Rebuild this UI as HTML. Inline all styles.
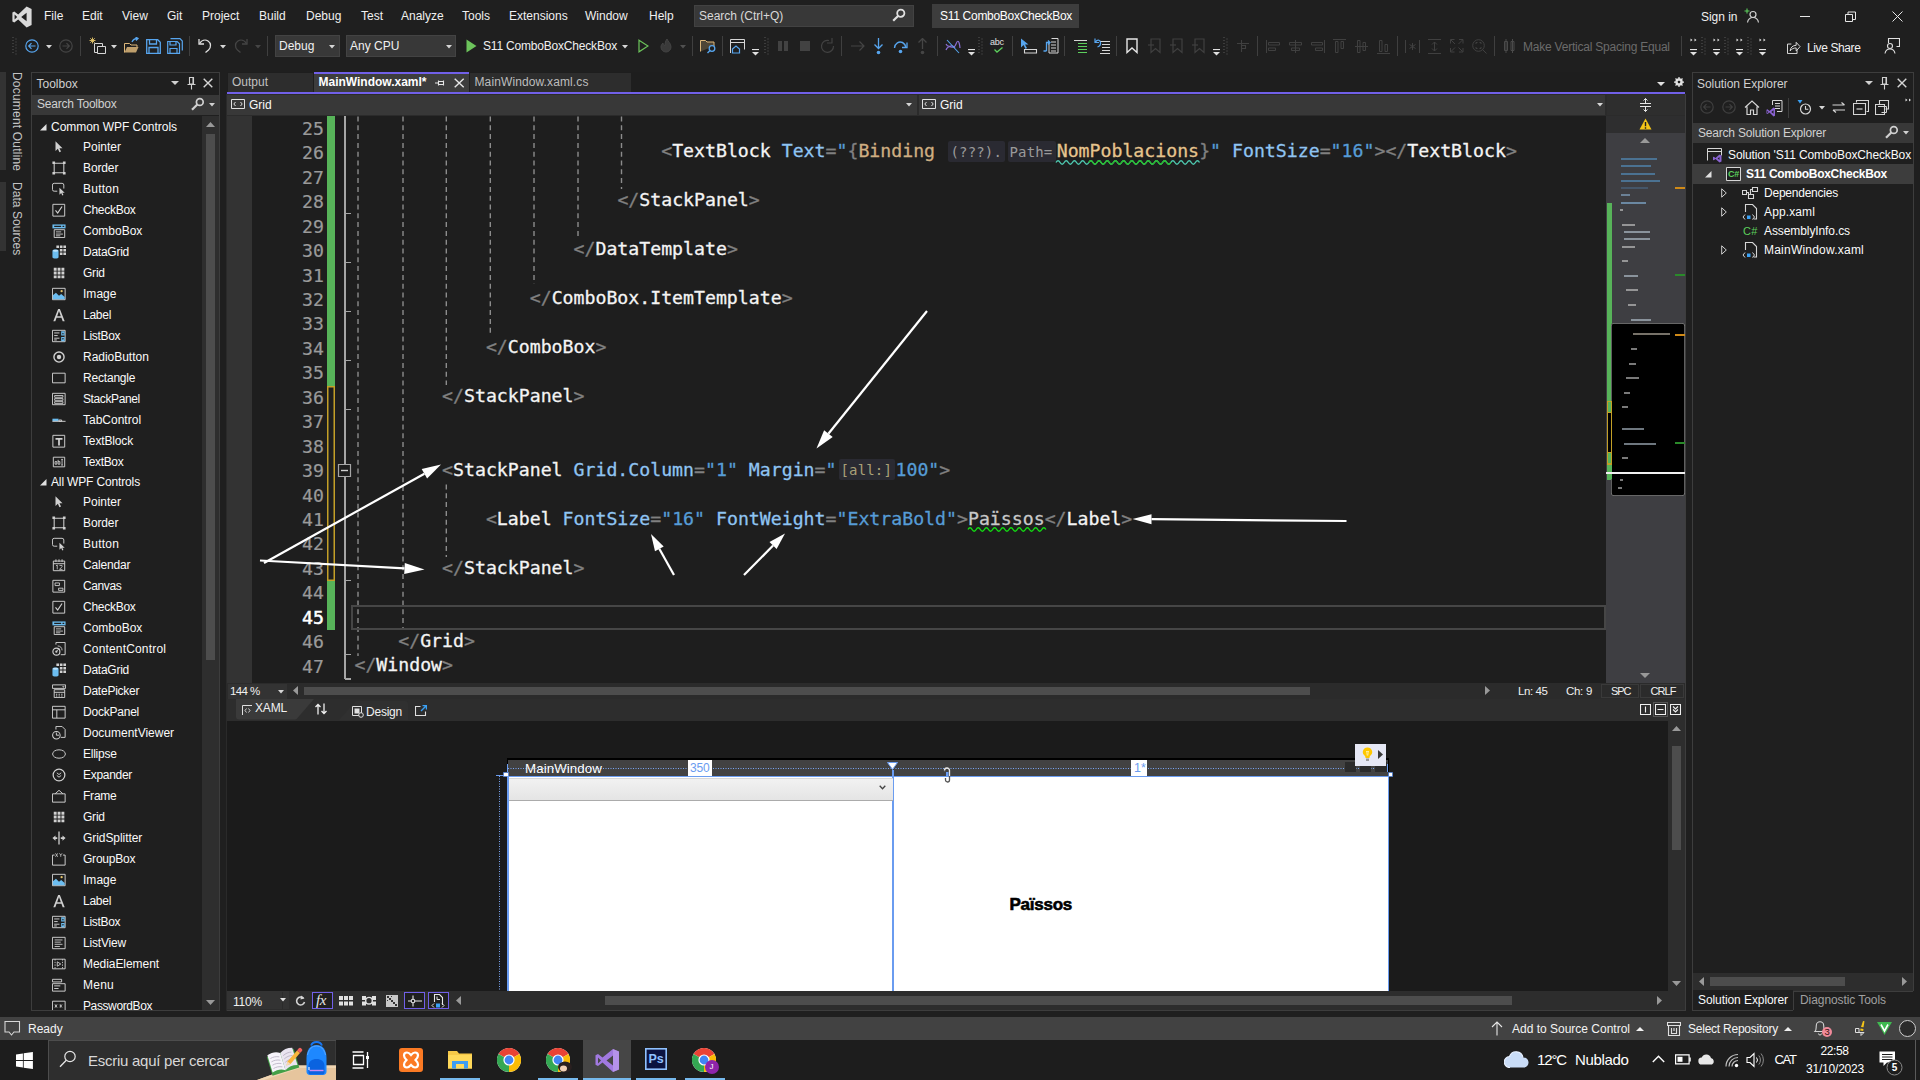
<!DOCTYPE html>
<html lang="ca"><head><meta charset="utf-8"><title>S11 ComboBoxCheckBox - Microsoft Visual Studio</title>
<style>
html,body{margin:0;padding:0;background:#1f1f1f;overflow:hidden;}
body{width:1920px;height:1080px;position:relative;overflow:hidden;font-family:"Liberation Sans",sans-serif;font-size:12px;color:#fafafa;}
div,svg{position:absolute;}
.t{white-space:pre;}
.m{white-space:pre;font-family:"DejaVu Sans Mono","Liberation Mono",monospace;}
.b{font-weight:bold;}
</style></head><body>
<svg style="left:12px;top:6px;" width="20" height="22" viewBox="0 0 20 22"><path d="M14.6 0.6 L19.6 2.9 V19.1 L14.6 21.4 L6.2 13.4 L2.3 16.4 L0.4 15.5 V6.5 L2.3 5.6 L6.2 8.6 Z M14.6 6.8 L9.2 11 L14.6 15.2 Z M2.6 8.6 V13.4 L5.2 11 Z" fill="#d9d9d9" fill-rule="evenodd"/></svg>
<div class="t" style="left:44px;top:8px;color:#f0f0f0;font-size:12px;line-height:16px;">File</div>
<div class="t" style="left:82px;top:8px;color:#f0f0f0;font-size:12px;line-height:16px;">Edit</div>
<div class="t" style="left:122px;top:8px;color:#f0f0f0;font-size:12px;line-height:16px;">View</div>
<div class="t" style="left:167px;top:8px;color:#f0f0f0;font-size:12px;line-height:16px;">Git</div>
<div class="t" style="left:202px;top:8px;color:#f0f0f0;font-size:12px;line-height:16px;">Project</div>
<div class="t" style="left:259px;top:8px;color:#f0f0f0;font-size:12px;line-height:16px;">Build</div>
<div class="t" style="left:306px;top:8px;color:#f0f0f0;font-size:12px;line-height:16px;">Debug</div>
<div class="t" style="left:361px;top:8px;color:#f0f0f0;font-size:12px;line-height:16px;">Test</div>
<div class="t" style="left:401px;top:8px;color:#f0f0f0;font-size:12px;line-height:16px;">Analyze</div>
<div class="t" style="left:462px;top:8px;color:#f0f0f0;font-size:12px;line-height:16px;">Tools</div>
<div class="t" style="left:509px;top:8px;color:#f0f0f0;font-size:12px;line-height:16px;">Extensions</div>
<div class="t" style="left:585px;top:8px;color:#f0f0f0;font-size:12px;line-height:16px;">Window</div>
<div class="t" style="left:649px;top:8px;color:#f0f0f0;font-size:12px;line-height:16px;">Help</div>
<div style="left:694px;top:5px;width:220px;height:22px;background:#383838;box-shadow:inset 0 0 0 1px #424242;"></div>
<div class="t" style="left:699px;top:8px;color:#d8d8d8;font-size:12px;line-height:16px;">Search (Ctrl+Q)</div>
<svg style="left:892px;top:8px;" width="14" height="14" viewBox="0 0 14 14"><circle cx="8.8" cy="5.2" r="3.6" fill="none" stroke="#e0e0e0" stroke-width="1.8"/><path d="M6.3 7.7L1.2 12.8" stroke="#e0e0e0" stroke-width="2.2"/></svg>
<div style="left:932px;top:4px;width:147px;height:24px;background:#3d3d3d;"></div>
<div class="t" style="left:940px;top:8px;color:#ffffff;font-size:12px;line-height:16px;letter-spacing:-0.293px;">S11 ComboBoxCheckBox</div>
<div class="t" style="left:1701px;top:9px;color:#f0f0f0;font-size:12px;line-height:16px;letter-spacing:-0.028px;">Sign in</div>
<svg style="left:1744px;top:8px;" width="16" height="16" viewBox="0 0 16 16"><circle cx="9" cy="6.5" r="3" fill="none" stroke="#d0d0d0" stroke-width="1.2"/><path d="M3.5 14.5c0.6-3.6 2.6-5 5.5-5s4.9 1.4 5.5 5" fill="none" stroke="#d0d0d0" stroke-width="1.2"/><path d="M3 0.5v5M0.5 3h5" stroke="#5ccf5c" stroke-width="1.1"/></svg>
<div style="left:1800px;top:16px;width:10px;height:1px;background:#e6e6e6;"></div>
<svg style="left:1845px;top:11px;" width="12" height="12" viewBox="0 0 12 12"><path d="M0.5 3.5h7v7h-7zM3 3.5V1h7.5v7.5H8" fill="none" stroke="#e6e6e6" stroke-width="1"/></svg>
<svg style="left:1892px;top:11px;" width="12" height="12" viewBox="0 0 12 12"><path d="M0.5 0.5l10 10M10.5 0.5l-10 10" stroke="#e6e6e6" stroke-width="1"/></svg>
<svg style="left:12px;top:37px;" width="6" height="18" viewBox="0 0 6 18"><path d="M1 0V18" stroke="#5a5a5a" stroke-width="1" stroke-dasharray="1 2"/><path d="M4 1.5V18" stroke="#5a5a5a" stroke-width="1" stroke-dasharray="1 2"/></svg>
<svg style="left:25px;top:39px;" width="14" height="14" viewBox="0 0 14 14"><circle cx="7" cy="7" r="6.2" fill="none" stroke="#57a5ee" stroke-width="1.2"/><path d="M10.5 7H4M6.5 4.2L3.7 7l2.8 2.8" fill="none" stroke="#57a5ee" stroke-width="1.2"/></svg>
<svg style="left:46px;top:45px;" width="6" height="3.5" viewBox="0 0 6 3.5"><path d="M0 0H6L3.0 3.5Z" fill="#d6d6d6"/></svg>
<svg style="left:59px;top:39px;" width="14" height="14" viewBox="0 0 14 14"><circle cx="7" cy="7" r="6.2" fill="none" stroke="#444" stroke-width="1.2"/><path d="M3.5 7H10M7.5 4.2L10.3 7 7.5 9.8" fill="none" stroke="#444" stroke-width="1.2"/></svg>
<div style="left:80px;top:36px;width:1px;height:20px;background:#3f3f3f;"></div>
<svg style="left:89px;top:37px;" width="18" height="18" viewBox="0 0 18 18"><path d="M5.5 6.5h8v9h-8z" fill="none" stroke="#d6d6d6" stroke-width="1"/><path d="M8.5 9.5h8v7h-8z" fill="#1f1f1f" stroke="#d6d6d6" stroke-width="1"/><path d="M3.5 0.5v6M0.5 3.5h6M1.3 1.3l4.4 4.4M5.7 1.3L1.3 5.7" stroke="#e8c76a" stroke-width="0.9"/></svg>
<svg style="left:111px;top:45px;" width="6" height="3.5" viewBox="0 0 6 3.5"><path d="M0 0H6L3.0 3.5Z" fill="#d6d6d6"/></svg>
<svg style="left:124px;top:37px;" width="16" height="17" viewBox="0 0 16 17"><path d="M0.5 15.5V6.5h5l1.5 1.5h6v2" fill="none" stroke="#dcb67a" stroke-width="1"/><path d="M0.5 15.5l2.5-5.5h11.5l-2.5 5.500z" fill="#dcb67a" opacity="0.85"/><path d="M8 5c1-2.500 3-3.500 5.500-3.500M11.500 0l2.500 1.500-2 2" fill="none" stroke="#57a5ee" stroke-width="1.3"/></svg>
<svg style="left:146px;top:39px;" width="15" height="15" viewBox="0 0 15 15"><path d="M0.7 0.7h11l2.600 2.600v11h-13.600z" fill="none" stroke="#57a5ee" stroke-width="1.300"/><path d="M3.500 0.700v4.300h7v-4.300M3 14.300v-5.800h9v5.800" fill="none" stroke="#57a5ee" stroke-width="1.300"/></svg>
<svg style="left:167px;top:38px;" width="16" height="16" viewBox="0 0 16 16"><path d="M3.500 0.700h9.500l2.300 2.300v9.500" fill="none" stroke="#57a5ee" stroke-width="1.200"/><path d="M0.700 3.500h9.500l2.300 2.300v9.500h-11.800z" fill="none" stroke="#57a5ee" stroke-width="1.200"/><path d="M3 3.500v3.500h6v-3.500M3 15.300v-4.800h7v4.800" fill="none" stroke="#57a5ee" stroke-width="1.200"/></svg>
<div style="left:189px;top:36px;width:1px;height:20px;background:#3f3f3f;"></div>
<svg style="left:198px;top:38px;" width="14" height="15" viewBox="0 0 14 15"><path d="M1 1v5h5" fill="none" stroke="#e0e0e0" stroke-width="1.300"/><path d="M1.500 5.500C3.500 2.500 7 1 10 3s3.500 6 0.500 9l-3 2.500" fill="none" stroke="#e0e0e0" stroke-width="1.300"/></svg>
<svg style="left:220px;top:45px;" width="6" height="3.5" viewBox="0 0 6 3.5"><path d="M0 0H6L3.0 3.5Z" fill="#d6d6d6"/></svg>
<svg style="left:234px;top:38px;" width="14" height="15" viewBox="0 0 14 15"><path d="M13 1v5h-5" fill="none" stroke="#454545" stroke-width="1.300"/><path d="M12.500 5.500C10.500 2.500 7 1 4 3s-3.500 6-0.500 9l3 2.500" fill="none" stroke="#454545" stroke-width="1.300"/></svg>
<svg style="left:255px;top:45px;" width="6" height="3.5" viewBox="0 0 6 3.5"><path d="M0 0H6L3.0 3.5Z" fill="#454545"/></svg>
<div style="left:267px;top:36px;width:1px;height:20px;background:#3f3f3f;"></div>
<div style="left:275px;top:35px;width:65px;height:22px;background:#383838;box-shadow:inset 0 0 0 1px #434343;"></div>
<div class="t" style="left:279px;top:38px;color:#f0f0f0;font-size:12px;line-height:16px;">Debug</div>
<svg style="left:329px;top:45px;" width="6" height="3.5" viewBox="0 0 6 3.5"><path d="M0 0H6L3.0 3.5Z" fill="#d6d6d6"/></svg>
<div style="left:346px;top:35px;width:110px;height:22px;background:#383838;box-shadow:inset 0 0 0 1px #434343;"></div>
<div class="t" style="left:350px;top:38px;color:#f0f0f0;font-size:12px;line-height:16px;">Any CPU</div>
<svg style="left:446px;top:45px;" width="6" height="3.5" viewBox="0 0 6 3.5"><path d="M0 0H6L3.0 3.5Z" fill="#d6d6d6"/></svg>
<svg style="left:466px;top:39px;" width="11" height="14" viewBox="0 0 11 14"><path d="M0.500 0.500L10.500 7 0.500 13.500Z" fill="#6cc35b"/></svg>
<div class="t" style="left:483px;top:38px;color:#f0f0f0;font-size:12px;line-height:16px;letter-spacing:-0.193px;">S11 ComboBoxCheckBox</div>
<svg style="left:622px;top:45px;" width="6" height="3.5" viewBox="0 0 6 3.5"><path d="M0 0H6L3.0 3.5Z" fill="#d6d6d6"/></svg>
<svg style="left:638px;top:39px;" width="11" height="14" viewBox="0 0 11 14"><path d="M1 1.200L10 7 1 12.800Z" fill="none" stroke="#6cc35b" stroke-width="1.200"/></svg>
<svg style="left:659px;top:38px;" width="16" height="16" viewBox="0 0 16 16"><path d="M8 1c1 3 4 4 4 8a5 5 0 0 1-10 0c0-2 1-3 2-4 0 2 1 2.500 2 2.500C6 5 6.500 3 8 1z" fill="#3a3a3a" stroke="#444" stroke-width="1"/></svg>
<svg style="left:680px;top:45px;" width="6" height="3.5" viewBox="0 0 6 3.5"><path d="M0 0H6L3.0 3.5Z" fill="#505050"/></svg>
<div style="left:692px;top:36px;width:1px;height:20px;background:#3f3f3f;"></div>
<svg style="left:700px;top:38px;" width="17" height="16" viewBox="0 0 17 16"><path d="M0.500 13.500V2.500h5l1.500 1.500h7v4" fill="#dcb67a" fill-opacity="0.250" stroke="#dcb67a" stroke-width="1"/><circle cx="12" cy="10.500" r="2.800" fill="#1f1f1f" stroke="#57a5ee" stroke-width="1.300"/><path d="M10 12.500L7.500 15" stroke="#57a5ee" stroke-width="1.500"/></svg>
<div style="left:722px;top:36px;width:1px;height:20px;background:#3f3f3f;"></div>
<svg style="left:730px;top:38px;" width="16" height="16" viewBox="0 0 16 16"><path d="M0.500 15V1.500h14v10" fill="none" stroke="#d6d6d6" stroke-width="1"/><path d="M0.500 4.500h14" stroke="#d6d6d6" stroke-width="1"/><path d="M2.500 11l3.500-3 3.500 3v4h-7z" fill="none" stroke="#57a5ee" stroke-width="1.200"/></svg>
<svg style="left:752px;top:49px;" width="7" height="7" viewBox="0 0 7 7"><path d="M0 0.5h7" stroke="#e0e0e0" stroke-width="1.2"/><path d="M0 3h7L3.5 6.5Z" fill="#e0e0e0"/></svg>
<svg style="left:764px;top:37px;" width="6" height="18" viewBox="0 0 6 18"><path d="M1 0V18" stroke="#5a5a5a" stroke-width="1" stroke-dasharray="1 2"/><path d="M4 1.5V18" stroke="#5a5a5a" stroke-width="1" stroke-dasharray="1 2"/></svg>
<div style="left:778px;top:41px;width:4px;height:10px;background:#424242;"></div>
<div style="left:784px;top:41px;width:4px;height:10px;background:#424242;"></div>
<div style="left:800px;top:41px;width:10px;height:10px;background:#424242;"></div>
<svg style="left:820px;top:38px;" width="15" height="16" viewBox="0 0 15 16"><path d="M9 2.500A6 6 0 1 0 13.500 8" fill="none" stroke="#424242" stroke-width="1.200"/><path d="M12 0v5h-5" fill="none" stroke="#424242" stroke-width="1.200"/></svg>
<div style="left:841px;top:36px;width:1px;height:20px;background:#3f3f3f;"></div>
<svg style="left:851px;top:40px;" width="14" height="12" viewBox="0 0 14 12"><path d="M0 6h13M8.500 1.500L13 6l-4.500 4.500" fill="none" stroke="#454545" stroke-width="1.200"/></svg>
<svg style="left:873px;top:38px;" width="11" height="17" viewBox="0 0 11 17"><path d="M5.500 0v10M1.500 6.500l4 4 4-4" fill="none" stroke="#57a5ee" stroke-width="1.300"/><circle cx="5.500" cy="14.500" r="1.800" fill="#57a5ee"/></svg>
<svg style="left:893px;top:39px;" width="16" height="15" viewBox="0 0 16 15"><path d="M1.500 9C2 4 6 2 9.500 3.500c2 1 3 3 3.500 5" fill="none" stroke="#57a5ee" stroke-width="1.400"/><path d="M9 8.500h5v-5" fill="none" stroke="#57a5ee" stroke-width="1.300"/><circle cx="7.500" cy="12.500" r="1.800" fill="#57a5ee"/></svg>
<svg style="left:917px;top:38px;" width="11" height="17" viewBox="0 0 11 17"><path d="M5.500 11V1M1.500 4.500l4-4 4 4" fill="none" stroke="#454545" stroke-width="1.300"/><circle cx="5.500" cy="14.500" r="1.800" fill="#454545"/></svg>
<div style="left:937px;top:36px;width:1px;height:20px;background:#3f3f3f;"></div>
<svg style="left:945px;top:39px;" width="16" height="15" viewBox="0 0 16 15"><path d="M1 11c3-8 7 2 10-6s4 4 4 4M1 5c3 6 6-2 9 4" fill="none" stroke="#8a6fd6" stroke-width="1.200"/><path d="M2 1l12 13" stroke="#57a5ee" stroke-width="1.100"/></svg>
<svg style="left:968px;top:49px;" width="7" height="7" viewBox="0 0 7 7"><path d="M0 0.5h7" stroke="#e0e0e0" stroke-width="1.2"/><path d="M0 3h7L3.5 6.5Z" fill="#e0e0e0"/></svg>
<svg style="left:978px;top:37px;" width="6" height="18" viewBox="0 0 6 18"><path d="M1 0V18" stroke="#5a5a5a" stroke-width="1" stroke-dasharray="1 2"/><path d="M4 1.5V18" stroke="#5a5a5a" stroke-width="1" stroke-dasharray="1 2"/></svg>
<div class="t" style="left:990px;top:37px;color:#e0e0e0;font-size:9px;line-height:10px;letter-spacing:-0.2px;">abc</div>
<svg style="left:994px;top:47px;" width="9" height="6" viewBox="0 0 9 6"><path d="M0.500 2.500l2.500 2.500 5.500-4.500" fill="none" stroke="#5ccf5c" stroke-width="1.300"/></svg>
<div style="left:1012px;top:36px;width:1px;height:20px;background:#3f3f3f;"></div>
<svg style="left:1020px;top:38px;" width="18" height="16" viewBox="0 0 18 16"><path d="M1 0.500v9l2.500-2.500 2 4 1.500-1-2-3.500h3.500z" fill="#57a5ee"/><path d="M4.500 11.500h12v3.500h-12z" fill="none" stroke="#d6d6d6" stroke-width="1.100"/></svg>
<svg style="left:1042px;top:38px;" width="17" height="16" viewBox="0 0 17 16"><path d="M9.500 0.500h6.500v14.500h-9v-11" fill="none" stroke="#d6d6d6" stroke-width="1"/><path d="M9 4h5M9 7h5M9 10h5M9 13h5" stroke="#d6d6d6" stroke-width="1"/><path d="M4.500 13V4.500h3M1.500 13h3M6 2.500l2 2-2 2" fill="none" stroke="#57a5ee" stroke-width="1.300"/></svg>
<div style="left:1064px;top:36px;width:1px;height:20px;background:#3f3f3f;"></div>
<svg style="left:1074px;top:40px;" width="14" height="13" viewBox="0 0 14 13"><path d="M0 0.500h13" stroke="#d6d6d6" stroke-width="1"/><path d="M4 3.500h9M4 6.500h9M4 9.500h9M4 12.500h9" stroke="#5ccf5c" stroke-width="1"/></svg>
<svg style="left:1094px;top:38px;" width="17" height="16" viewBox="0 0 17 16"><path d="M6 3.500h10M8 6.500h8M8 9.500h8M8 12.500h8M6 15.500h10" stroke="#d6d6d6" stroke-width="1"/><path d="M1 0.500v4h4M1.500 4C3 1.500 6 1.500 6.500 4.500S5 8.500 3.500 9" fill="none" stroke="#57a5ee" stroke-width="1.200"/></svg>
<div style="left:1116px;top:36px;width:1px;height:20px;background:#3f3f3f;"></div>
<svg style="left:1126px;top:38px;" width="12" height="16" viewBox="0 0 12 16"><path d="M1 1h10v13.500l-5-4.500-5 4.500z" fill="none" stroke="#e6e6e6" stroke-width="1.400"/></svg>
<svg style="left:1148px;top:38px;" width="14" height="16" viewBox="0 0 14 16"><path d="M3 1h9v13.500l-4.500-4-4.500 4z" fill="none" stroke="#404040" stroke-width="1.200"/><path d="M0 7h6" stroke="#404040" stroke-width="1.200"/></svg>
<svg style="left:1170px;top:38px;" width="14" height="16" viewBox="0 0 14 16"><path d="M3 1h9v13.500l-4.500-4-4.500 4z" fill="none" stroke="#404040" stroke-width="1.200"/><path d="M0 7h6" stroke="#404040" stroke-width="1.200"/></svg>
<svg style="left:1192px;top:38px;" width="14" height="16" viewBox="0 0 14 16"><path d="M3 1h9v13.500l-4.500-4-4.500 4z" fill="none" stroke="#404040" stroke-width="1.200"/><path d="M0 7h6" stroke="#404040" stroke-width="1.200"/></svg>
<svg style="left:1213px;top:49px;" width="7" height="7" viewBox="0 0 7 7"><path d="M0 0.5h7" stroke="#e0e0e0" stroke-width="1.2"/><path d="M0 3h7L3.5 6.5Z" fill="#e0e0e0"/></svg>
<svg style="left:1223px;top:37px;" width="6" height="18" viewBox="0 0 6 18"><path d="M1 0V18" stroke="#5a5a5a" stroke-width="1" stroke-dasharray="1 2"/><path d="M4 1.5V18" stroke="#5a5a5a" stroke-width="1" stroke-dasharray="1 2"/></svg>
<svg style="left:1237px;top:40px;" width="13" height="13" viewBox="0 0 13 13"><path d="M0 3.500h12M4.500 0v12M4.500 5.500h4v3h-4" fill="none" stroke="#404040" stroke-width="1.100"/></svg>
<div style="left:1257px;top:36px;width:1px;height:20px;background:#3f3f3f;"></div>
<svg style="left:1266px;top:40px;" width="15" height="13" viewBox="0 0 15 13"><path d="M0.500 0v13" stroke="#404040"/><path d="M2.500 2.500h11v2.500h-11zM2.500 8h7v2.500h-7z" fill="none" stroke="#404040"/></svg>
<svg style="left:1288px;top:40px;" width="15" height="13" viewBox="0 0 15 13"><path d="M7.500 0v13" stroke="#404040"/><path d="M1.500 2.500h12v2.500h-12zM3.500 8h8v2.500h-8z" fill="none" stroke="#404040"/></svg>
<svg style="left:1310px;top:40px;" width="15" height="13" viewBox="0 0 15 13"><path d="M14.500 0v13" stroke="#404040"/><path d="M1.500 2.500h11v2.500h-11zM5.500 8h7v2.500h-7z" fill="none" stroke="#404040"/></svg>
<svg style="left:1333px;top:39px;" width="13" height="15" viewBox="0 0 13 15"><path d="M0 0.500h13" stroke="#404040"/><path d="M2.500 2.500h2.500v11h-2.500zM8 2.500h2.500v7h-2.500z" fill="none" stroke="#404040"/></svg>
<svg style="left:1355px;top:39px;" width="13" height="15" viewBox="0 0 13 15"><path d="M0 7.500h13" stroke="#404040"/><path d="M2.500 1.500h2.500v12h-2.500zM8 3.500h2.500v8h-2.500z" fill="none" stroke="#404040"/></svg>
<svg style="left:1377px;top:39px;" width="13" height="15" viewBox="0 0 13 15"><path d="M0 14.500h13" stroke="#404040"/><path d="M2.500 1.500h2.500v11h-2.500zM8 5.500h2.500v7h-2.500z" fill="none" stroke="#404040"/></svg>
<div style="left:1397px;top:36px;width:1px;height:20px;background:#3f3f3f;"></div>
<svg style="left:1405px;top:40px;" width="16" height="13" viewBox="0 0 16 13"><path d="M0.500 0v13M14.500 0v13M7.500 3v7M4.500 4.500l6 4M10.500 4.500l-6 4" stroke="#404040" fill="none"/></svg>
<svg style="left:1428px;top:39px;" width="14" height="15" viewBox="0 0 14 15"><path d="M0 0.500h13M0 14.500h13M6.500 3v9M4 5.500l2.500-2.500 2.500 2.500M4 9.500l2.500 2.500 2.500-2.500" stroke="#404040" fill="none"/></svg>
<svg style="left:1450px;top:39px;" width="14" height="14" viewBox="0 0 14 14"><path d="M0.500 4.500v-4h4M9 0.500h4v4M13 9v4h-4M4.500 13h-4v-4M1 1l4 4M12.500 1l-4 4M12.500 12.500l-4-4M1 12.500l4-4" stroke="#404040" fill="none"/></svg>
<svg style="left:1472px;top:39px;" width="15" height="15" viewBox="0 0 15 15"><circle cx="6.500" cy="6.500" r="5.800" fill="none" stroke="#404040"/><path d="M10.500 10.500l4 4M4 5v-1.500h1.500M7.500 3.500h1.500v1.500M9 8v1.500h-1.500M5.500 9.500h-1.500v-1.500" stroke="#404040" fill="none"/></svg>
<div style="left:1494px;top:36px;width:1px;height:20px;background:#3f3f3f;"></div>
<svg style="left:1503px;top:39px;" width="13" height="15" viewBox="0 0 13 15"><path d="M1.500 2.500h3v9h-3zM8 2.500h3v9h-3zM3 0v14M9.500 0v14" stroke="#4a4a4a" fill="none"/></svg>
<div class="t" style="left:1523px;top:39px;color:#6b6b6b;font-size:12px;line-height:16px;letter-spacing:-0.22px;">Make Vertical Spacing Equal</div>
<div style="left:1681px;top:36px;width:1px;height:20px;background:#3f3f3f;"></div>
<svg style="left:1690px;top:38px;" width="8" height="4" viewBox="0 0 8 4"><path d="M0.500 0.500l2 1.500-2 1.500zM4.500 0.500l2 1.500-2 1.500z" fill="#e0e0e0"/></svg>
<svg style="left:1690px;top:49px;" width="7" height="7" viewBox="0 0 7 7"><path d="M0 0.5h7" stroke="#e0e0e0" stroke-width="1.2"/><path d="M0 3h7L3.5 6.5Z" fill="#e0e0e0"/></svg>
<svg style="left:1713px;top:38px;" width="8" height="4" viewBox="0 0 8 4"><path d="M0.500 0.500l2 1.500-2 1.500zM4.500 0.500l2 1.500-2 1.500z" fill="#e0e0e0"/></svg>
<svg style="left:1713px;top:49px;" width="7" height="7" viewBox="0 0 7 7"><path d="M0 0.5h7" stroke="#e0e0e0" stroke-width="1.2"/><path d="M0 3h7L3.5 6.5Z" fill="#e0e0e0"/></svg>
<svg style="left:1736px;top:38px;" width="8" height="4" viewBox="0 0 8 4"><path d="M0.500 0.500l2 1.500-2 1.500zM4.500 0.500l2 1.500-2 1.500z" fill="#e0e0e0"/></svg>
<svg style="left:1736px;top:49px;" width="7" height="7" viewBox="0 0 7 7"><path d="M0 0.5h7" stroke="#e0e0e0" stroke-width="1.2"/><path d="M0 3h7L3.5 6.5Z" fill="#e0e0e0"/></svg>
<svg style="left:1759px;top:38px;" width="8" height="4" viewBox="0 0 8 4"><path d="M0.500 0.500l2 1.500-2 1.500zM4.500 0.500l2 1.500-2 1.500z" fill="#e0e0e0"/></svg>
<svg style="left:1759px;top:49px;" width="7" height="7" viewBox="0 0 7 7"><path d="M0 0.5h7" stroke="#e0e0e0" stroke-width="1.2"/><path d="M0 3h7L3.5 6.5Z" fill="#e0e0e0"/></svg>
<svg style="left:1701px;top:37px;" width="6" height="18" viewBox="0 0 6 18"><path d="M1 0V18" stroke="#5a5a5a" stroke-width="1" stroke-dasharray="1 2"/><path d="M4 1.5V18" stroke="#5a5a5a" stroke-width="1" stroke-dasharray="1 2"/></svg>
<svg style="left:1724px;top:37px;" width="6" height="18" viewBox="0 0 6 18"><path d="M1 0V18" stroke="#5a5a5a" stroke-width="1" stroke-dasharray="1 2"/><path d="M4 1.5V18" stroke="#5a5a5a" stroke-width="1" stroke-dasharray="1 2"/></svg>
<svg style="left:1747px;top:37px;" width="6" height="18" viewBox="0 0 6 18"><path d="M1 0V18" stroke="#5a5a5a" stroke-width="1" stroke-dasharray="1 2"/><path d="M4 1.5V18" stroke="#5a5a5a" stroke-width="1" stroke-dasharray="1 2"/></svg>
<svg style="left:1787px;top:41px;" width="14" height="13" viewBox="0 0 16 15"><path d="M5 3.500h-4.500v11h11v-4" fill="none" stroke="#e0e0e0" stroke-width="1.100"/><path d="M3.500 11.500c0.500-4 3-6.500 7-6.500v-3.500l4.500 5-4.500 5v-3.500c-3 0-5 1-7 3.500z" fill="none" stroke="#e0e0e0" stroke-width="1.100"/></svg>
<div class="t" style="left:1807px;top:40px;color:#f0f0f0;font-size:12px;line-height:16px;letter-spacing:-0.387px;">Live Share</div>
<svg style="left:1884px;top:38px;" width="16" height="16" viewBox="0 0 16 16"><path d="M4.500 5v-4.500h11v8h-3" fill="none" stroke="#e0e0e0" stroke-width="1.100"/><circle cx="6" cy="8" r="2.500" fill="none" stroke="#e0e0e0" stroke-width="1.100"/><path d="M1 15.500c0.500-3 2.500-4.500 5-4.500s4.500 1.500 5 4.500" fill="none" stroke="#e0e0e0" stroke-width="1.100"/></svg>
<div style="left:0px;top:72px;width:6px;height:98px;background:#333333;"></div>
<div style="left:0px;top:182px;width:6px;height:69px;background:#333333;"></div>
<div class="t" style="left:9px;top:72px;width:16px;height:98px;writing-mode:vertical-rl;color:#c4c4c4;font-size:12px;line-height:16px;letter-spacing:0.2px;">Document Outline</div>
<div class="t" style="left:9px;top:182px;width:16px;height:68px;writing-mode:vertical-rl;color:#c4c4c4;font-size:12px;line-height:16px;letter-spacing:0.05px;">Data Sources</div>
<div style="left:31px;top:72px;width:189px;height:939px;background:#1f1f1f;box-shadow:inset 0 0 0 1px #3d3d3d;"></div>
<div class="t" style="left:36.5px;top:76px;color:#d0d0d0;font-size:12px;line-height:16px;">Toolbox</div>
<svg style="left:171px;top:81px;" width="8" height="4" viewBox="0 0 8 4"><path d="M0 0H8L4.0 4Z" fill="#d0d0d0"/></svg>
<svg style="left:187px;top:77px;" width="9" height="13" viewBox="0 0 9 13"><path d="M2.500 0.500h4v6.500h-4zM6 0.500v6.500M0.500 7.500h8M4.500 7.500v5" fill="none" stroke="#d0d0d0" stroke-width="1.100"/></svg>
<svg style="left:203px;top:78px;" width="10" height="10" viewBox="0 0 10 10"><path d="M0.700 0.700l8.600 8.600M9.300 0.700l-8.600 8.600" stroke="#d6d6d6" stroke-width="1.400"/></svg>
<div style="left:32px;top:95px;width:187px;height:20px;background:#383838;"></div>
<div class="t" style="left:37px;top:96px;color:#d0d0d0;font-size:12px;line-height:16px;letter-spacing:-0.214px;">Search Toolbox</div>
<svg style="left:191px;top:97px;" width="14" height="14" viewBox="0 0 14 14"><circle cx="8.800" cy="5" r="3.400" fill="none" stroke="#d0d0d0" stroke-width="1.700"/><path d="M6.300 7.500L1 12.800" stroke="#d0d0d0" stroke-width="2.200"/></svg>
<svg style="left:209px;top:103px;" width="6" height="3.5" viewBox="0 0 6 3.5"><path d="M0 0H6L3.0 3.5Z" fill="#d0d0d0"/></svg>
<div style="left:202px;top:116px;width:17px;height:894px;background:#2e2e2e;"></div>
<svg style="left:206px;top:122px;" width="9" height="5" viewBox="0 0 9 5"><path d="M0 5H9L4.5 0Z" fill="#999999"/></svg>
<div style="left:206px;top:134px;width:9px;height:526px;background:#4d4d4d;"></div>
<svg style="left:206px;top:1000px;" width="9" height="5" viewBox="0 0 9 5"><path d="M0 0H9L4.5 5Z" fill="#999999"/></svg>
<svg style="left:40px;top:123.9px;" width="7" height="7" viewBox="0 0 7 7"><path d="M6.500 0v6.500h-6.500z" fill="#e0e0e0"/></svg>
<div class="t" style="left:51px;top:119px;color:#fafafa;font-size:12px;line-height:16px;letter-spacing:-0.037px;">Common WPF Controls</div>
<svg style="left:52px;top:140px;" width="14" height="14" viewBox="0 0 16 16"><path d="M4 1.500v11l2.700-2.500 1.800 4 1.800-0.800-1.800-3.900h3.500z" fill="#d0d0d0"/></svg>
<div class="t" style="left:83px;top:139px;color:#fafafa;font-size:12px;line-height:16px;letter-spacing:0.004px;">Pointer</div>
<svg style="left:52px;top:161px;" width="14" height="14" viewBox="0 0 16 16"><path d="M2.500 2.500h11v11h-11z" fill="none" stroke="#d0d0d0" stroke-width="1.200"/><path d="M0.500 0.500h3v3h-3zM12.500 0.500h3v3h-3zM0.500 12.500h3v3h-3zM12.500 12.500h3v3h-3z" fill="#d0d0d0"/></svg>
<div class="t" style="left:83px;top:160px;color:#fafafa;font-size:12px;line-height:16px;letter-spacing:-0.120px;">Border</div>
<svg style="left:52px;top:182px;" width="14" height="14" viewBox="0 0 16 16"><path d="M6 10.500h-3.500a2 2 0 0 1-2-2v-5a2 2 0 0 1 2-2h9a2 2 0 0 1 2 2v4" fill="none" stroke="#d0d0d0" stroke-width="1.100"/><path d="M8.500 6.500v8l2-1.800 1.300 2.800 1.300-0.600-1.300-2.700h2.700z" fill="#d0d0d0"/></svg>
<div class="t" style="left:83px;top:181px;color:#fafafa;font-size:12px;line-height:16px;letter-spacing:0.226px;">Button</div>
<svg style="left:52px;top:203px;" width="14" height="14" viewBox="0 0 16 16"><path d="M1 1.500h13.500v13.500h-13.500z" fill="none" stroke="#d0d0d0" stroke-width="1.100"/><path d="M4 8.500l2.500 3 5-7.500" fill="none" stroke="#d0d0d0" stroke-width="1.400"/></svg>
<div class="t" style="left:83px;top:202px;color:#fafafa;font-size:12px;line-height:16px;letter-spacing:-0.268px;">CheckBox</div>
<svg style="left:52px;top:224px;" width="14" height="14" viewBox="0 0 16 16"><path d="M0.500 0.500h15v4.500h-15z" fill="#6cbdf0"/><path d="M2.500 2h8v1.500h-8zM12 2h2v1.500h-2z" fill="#1f1f1f"/><path d="M2.500 6.500h12v9h-12z" fill="none" stroke="#d0d0d0" stroke-width="1.100"/><path d="M4.500 9h6M4.500 11.500h8M4.500 13.500h5" stroke="#d0d0d0" stroke-width="1"/></svg>
<div class="t" style="left:83px;top:223px;color:#fafafa;font-size:12px;line-height:16px;letter-spacing:-0.008px;">ComboBox</div>
<svg style="left:52px;top:245px;" width="14" height="14" viewBox="0 0 16 16"><path d="M5 0.500h3v3h-3zM9 0.500h3v3h-3zM13 0.500h3v3h-3zM9 4.500h3v3h-3zM13 4.500h3v3h-3zM9 8.500h3v3h-3zM13 8.500h3v3h-3z" fill="#d0d0d0"/><path d="M0.500 6.500c0-2 7-2 7 0v7.500c0 2-7 2-7 0z" fill="#6cbdf0"/><ellipse cx="4" cy="6.500" rx="3" ry="1.100" fill="#bfe3fb"/></svg>
<div class="t" style="left:83px;top:244px;color:#fafafa;font-size:12px;line-height:16px;letter-spacing:-0.246px;">DataGrid</div>
<svg style="left:52px;top:266px;" width="14" height="14" viewBox="0 0 16 16"><path d="M2 2h3.300v3.300h-3.300zM6.400 2h3.300v3.300h-3.300zM10.800 2h3.300v3.300h-3.300zM2 6.400h3.300v3.300h-3.300zM6.400 6.400h3.300v3.300h-3.300zM10.800 6.400h3.300v3.300h-3.300zM2 10.800h3.300v3.300h-3.300zM6.400 10.800h3.300v3.300h-3.300zM10.800 10.800h3.300v3.300h-3.300z" fill="#d0d0d0"/></svg>
<div class="t" style="left:83px;top:265px;color:#fafafa;font-size:12px;line-height:16px;letter-spacing:-0.218px;">Grid</div>
<svg style="left:52px;top:287px;" width="14" height="14" viewBox="0 0 16 16"><path d="M0.500 1.500h14.500v13h-14.500z" fill="none" stroke="#d0d0d0" stroke-width="1.100"/><path d="M1 14v-4.500l3.500-3 3.500 3.500 2.500-2 4 3.500v2.500z" fill="#6cbdf0"/><circle cx="11" cy="4.800" r="1.300" fill="#e8c76a"/></svg>
<div class="t" style="left:83px;top:286px;color:#fafafa;font-size:12px;line-height:16px;letter-spacing:0.039px;">Image</div>
<svg style="left:52px;top:308px;" width="14" height="14" viewBox="0 0 16 16"><path d="M1.500 15L7 1h2l5.500 14h-2.300l-1.400-3.800h-5.600l-1.400 3.800zM5.900 9.300h4.200L8 3.500z" fill="#d0d0d0"/></svg>
<div class="t" style="left:83px;top:307px;color:#fafafa;font-size:12px;line-height:16px;letter-spacing:-0.263px;">Label</div>
<svg style="left:52px;top:329px;" width="14" height="14" viewBox="0 0 16 16"><path d="M0.500 1.500h14.500v13h-14.500z" fill="none" stroke="#d0d0d0" stroke-width="1.100"/><path d="M2.500 4.500h6M2.500 7.500h4M2.500 10.500h6M2.500 12.500h3" stroke="#d0d0d0" stroke-width="1.100"/><path d="M10.500 2.500h4v5h-4zM10.500 9h4v5h-4z" fill="#6cbdf0"/><path d="M11.300 6l1.200-2 1.200 2zM11.300 10.500l1.200 2 1.200-2z" fill="#1f1f1f"/></svg>
<div class="t" style="left:83px;top:328px;color:#fafafa;font-size:12px;line-height:16px;letter-spacing:-0.293px;">ListBox</div>
<svg style="left:52px;top:350px;" width="14" height="14" viewBox="0 0 16 16"><circle cx="8" cy="8" r="5.800" fill="none" stroke="#d0d0d0" stroke-width="1.600"/><circle cx="8" cy="8" r="2.500" fill="#d0d0d0"/></svg>
<div class="t" style="left:83px;top:349px;color:#fafafa;font-size:12px;line-height:16px;letter-spacing:-0.023px;">RadioButton</div>
<svg style="left:52px;top:371px;" width="14" height="14" viewBox="0 0 16 16"><path d="M0.500 2.500h14.500v11h-14.500z" fill="none" stroke="#d0d0d0" stroke-width="1.100"/></svg>
<div class="t" style="left:83px;top:370px;color:#fafafa;font-size:12px;line-height:16px;letter-spacing:-0.193px;">Rectangle</div>
<svg style="left:52px;top:392px;" width="14" height="14" viewBox="0 0 16 16"><path d="M0.500 1.500h14.500v13h-14.500z" fill="none" stroke="#d0d0d0" stroke-width="1.100"/><path d="M3 4h9.500v2h-9.500zM3 7.500h9.500v2h-9.500zM3 11h9.500v2h-9.500z" fill="none" stroke="#d0d0d0" stroke-width="1"/></svg>
<div class="t" style="left:83px;top:391px;color:#fafafa;font-size:12px;line-height:16px;letter-spacing:-0.390px;">StackPanel</div>
<svg style="left:52px;top:413px;" width="14" height="14" viewBox="0 0 16 16"><path d="M0.500 6.500h7v3h-7z" fill="#6cbdf0"/><path d="M8 8h3v1.500h-3zM0.500 9.500h15" fill="none" stroke="#d0d0d0" stroke-width="1.100"/></svg>
<div class="t" style="left:83px;top:412px;color:#fafafa;font-size:12px;line-height:16px;letter-spacing:0.002px;">TabControl</div>
<svg style="left:52px;top:434px;" width="14" height="14" viewBox="0 0 16 16"><path d="M1 1.500h13.500v13.500h-13.500z" fill="none" stroke="#d0d0d0" stroke-width="1.100"/><path d="M4 4.500h8v2h-3v6.500h-2v-6.500h-3z" fill="#d0d0d0"/></svg>
<div class="t" style="left:83px;top:433px;color:#fafafa;font-size:12px;line-height:16px;letter-spacing:-0.145px;">TextBlock</div>
<svg style="left:52px;top:455px;" width="14" height="14" viewBox="0 0 16 16"><path d="M1.500 2.500h13v11h-13z" fill="none" stroke="#d0d0d0" stroke-width="1.100"/><path d="M3.500 10.500v-3h2v3zM7 10.500v-5M7 7.500h2v3h-2M11.500 5v6.500M10.500 5h2M10.500 11.500h2" fill="none" stroke="#d0d0d0" stroke-width="1"/></svg>
<div class="t" style="left:83px;top:454px;color:#fafafa;font-size:12px;line-height:16px;letter-spacing:-0.341px;">TextBox</div>
<svg style="left:40px;top:478.75px;" width="7" height="7" viewBox="0 0 7 7"><path d="M6.500 0v6.500h-6.500z" fill="#e0e0e0"/></svg>
<div class="t" style="left:51px;top:474px;color:#fafafa;font-size:12px;line-height:16px;letter-spacing:-0.147px;">All WPF Controls</div>
<svg style="left:52px;top:495px;" width="14" height="14" viewBox="0 0 16 16"><path d="M4 1.500v11l2.700-2.500 1.800 4 1.800-0.800-1.800-3.900h3.500z" fill="#d0d0d0"/></svg>
<div class="t" style="left:83px;top:494px;color:#fafafa;font-size:12px;line-height:16px;letter-spacing:0.004px;">Pointer</div>
<svg style="left:52px;top:516px;" width="14" height="14" viewBox="0 0 16 16"><path d="M2.500 2.500h11v11h-11z" fill="none" stroke="#d0d0d0" stroke-width="1.200"/><path d="M0.500 0.500h3v3h-3zM12.500 0.500h3v3h-3zM0.500 12.500h3v3h-3zM12.500 12.500h3v3h-3z" fill="#d0d0d0"/></svg>
<div class="t" style="left:83px;top:515px;color:#fafafa;font-size:12px;line-height:16px;letter-spacing:-0.120px;">Border</div>
<svg style="left:52px;top:537px;" width="14" height="14" viewBox="0 0 16 16"><path d="M6 10.500h-3.500a2 2 0 0 1-2-2v-5a2 2 0 0 1 2-2h9a2 2 0 0 1 2 2v4" fill="none" stroke="#d0d0d0" stroke-width="1.100"/><path d="M8.500 6.500v8l2-1.800 1.300 2.800 1.300-0.600-1.300-2.700h2.700z" fill="#d0d0d0"/></svg>
<div class="t" style="left:83px;top:536px;color:#fafafa;font-size:12px;line-height:16px;letter-spacing:0.226px;">Button</div>
<svg style="left:52px;top:558px;" width="14" height="14" viewBox="0 0 16 16"><path d="M1.500 3.500h13v11h-13z" fill="none" stroke="#d0d0d0" stroke-width="1.100"/><path d="M1.500 6.500h13M4.500 1.500v3M8 1.500v3M11.500 1.500v3" stroke="#d0d0d0" stroke-width="1.100"/><path d="M4.500 9l1.500-1v5M8.500 8.500h3v1.500l-3 3h3.500" fill="none" stroke="#d0d0d0" stroke-width="0.900"/></svg>
<div class="t" style="left:83px;top:557px;color:#fafafa;font-size:12px;line-height:16px;letter-spacing:-0.175px;">Calendar</div>
<svg style="left:52px;top:579px;" width="14" height="14" viewBox="0 0 16 16"><path d="M1 1.500h13.500v13.500h-13.500z" fill="none" stroke="#d0d0d0" stroke-width="1.100"/><path d="M3.500 4.500h5v3h-5zM7.500 10.500h5v2.500h-5z" fill="none" stroke="#d0d0d0" stroke-width="1"/></svg>
<div class="t" style="left:83px;top:578px;color:#fafafa;font-size:12px;line-height:16px;letter-spacing:-0.398px;">Canvas</div>
<svg style="left:52px;top:600px;" width="14" height="14" viewBox="0 0 16 16"><path d="M1 1.500h13.500v13.500h-13.500z" fill="none" stroke="#d0d0d0" stroke-width="1.100"/><path d="M4 8.500l2.500 3 5-7.500" fill="none" stroke="#d0d0d0" stroke-width="1.400"/></svg>
<div class="t" style="left:83px;top:599px;color:#fafafa;font-size:12px;line-height:16px;letter-spacing:-0.268px;">CheckBox</div>
<svg style="left:52px;top:621px;" width="14" height="14" viewBox="0 0 16 16"><path d="M0.500 0.500h15v4.500h-15z" fill="#6cbdf0"/><path d="M2.500 2h8v1.500h-8zM12 2h2v1.500h-2z" fill="#1f1f1f"/><path d="M2.500 6.500h12v9h-12z" fill="none" stroke="#d0d0d0" stroke-width="1.100"/><path d="M4.500 9h6M4.500 11.500h8M4.500 13.500h5" stroke="#d0d0d0" stroke-width="1"/></svg>
<div class="t" style="left:83px;top:620px;color:#fafafa;font-size:12px;line-height:16px;letter-spacing:-0.008px;">ComboBox</div>
<svg style="left:52px;top:642px;" width="14" height="14" viewBox="0 0 16 16"><path d="M4.500 3v-2.500h10.500v14h-5" fill="none" stroke="#d0d0d0" stroke-width="1.100"/><circle cx="5" cy="11" r="4" fill="none" stroke="#d0d0d0" stroke-width="1.300"/><circle cx="5" cy="11" r="1.300" fill="#d0d0d0"/><path d="M5 11l3-3.500M6.500 4.500c3 0 5 2 5 5" fill="none" stroke="#d0d0d0" stroke-width="1"/></svg>
<div class="t" style="left:83px;top:641px;color:#fafafa;font-size:12px;line-height:16px;letter-spacing:0.167px;">ContentControl</div>
<svg style="left:52px;top:663px;" width="14" height="14" viewBox="0 0 16 16"><path d="M5 0.500h3v3h-3zM9 0.500h3v3h-3zM13 0.500h3v3h-3zM9 4.500h3v3h-3zM13 4.500h3v3h-3zM9 8.500h3v3h-3zM13 8.500h3v3h-3z" fill="#d0d0d0"/><path d="M0.500 6.500c0-2 7-2 7 0v7.500c0 2-7 2-7 0z" fill="#6cbdf0"/><ellipse cx="4" cy="6.500" rx="3" ry="1.100" fill="#bfe3fb"/></svg>
<div class="t" style="left:83px;top:662px;color:#fafafa;font-size:12px;line-height:16px;letter-spacing:-0.246px;">DataGrid</div>
<svg style="left:52px;top:684px;" width="14" height="14" viewBox="0 0 16 16"><path d="M0.500 1h15v4h-15z" fill="none" stroke="#d0d0d0" stroke-width="1.100"/><path d="M11.500 2.500h3l-1.500 1.800z" fill="#d0d0d0"/><path d="M2.500 6.500h12v9h-12zM2.500 9.500h12" fill="none" stroke="#d0d0d0" stroke-width="1.100"/><path d="M4.500 11h1.500v1.300h-1.500zM7.500 11h1.500v1.300h-1.500zM10.500 11h1.500v1.300h-1.500zM4.500 13h1.500v1.300h-1.500zM7.500 13h1.500v1.300h-1.500zM10.500 13h1.500v1.300h-1.500z" fill="#d0d0d0"/></svg>
<div class="t" style="left:83px;top:683px;color:#fafafa;font-size:12px;line-height:16px;letter-spacing:-0.239px;">DatePicker</div>
<svg style="left:52px;top:705px;" width="14" height="14" viewBox="0 0 16 16"><path d="M0.500 1.500h14.500v13.500h-14.500zM0.500 5.500h14.500M5.500 5.500v9.500" fill="none" stroke="#d0d0d0" stroke-width="1.100"/></svg>
<div class="t" style="left:83px;top:704px;color:#fafafa;font-size:12px;line-height:16px;letter-spacing:-0.220px;">DockPanel</div>
<svg style="left:52px;top:726px;" width="14" height="14" viewBox="0 0 16 16"><path d="M4.500 4v-3.500h7l3.500 3.500v9h-5" fill="none" stroke="#d0d0d0" stroke-width="1.100"/><circle cx="5" cy="10.500" r="4.300" fill="none" stroke="#d0d0d0" stroke-width="1.200"/><path d="M5 7.500v3h3" fill="none" stroke="#d0d0d0" stroke-width="1.100"/></svg>
<div class="t" style="left:83px;top:725px;color:#fafafa;font-size:12px;line-height:16px;letter-spacing:-0.008px;">DocumentViewer</div>
<svg style="left:52px;top:747px;" width="14" height="14" viewBox="0 0 16 16"><ellipse cx="8" cy="8" rx="7.300" ry="4.800" fill="none" stroke="#d0d0d0" stroke-width="1.100"/></svg>
<div class="t" style="left:83px;top:746px;color:#fafafa;font-size:12px;line-height:16px;letter-spacing:-0.257px;">Ellipse</div>
<svg style="left:52px;top:768px;" width="14" height="14" viewBox="0 0 16 16"><circle cx="8" cy="8" r="6.700" fill="none" stroke="#d0d0d0" stroke-width="1.400"/><path d="M5.500 5.500l2.500 2 2.500-2M5.500 8.500l2.500 2 2.500-2" fill="none" stroke="#d0d0d0" stroke-width="1.100"/></svg>
<div class="t" style="left:83px;top:767px;color:#fafafa;font-size:12px;line-height:16px;letter-spacing:-0.290px;">Expander</div>
<svg style="left:52px;top:789px;" width="14" height="14" viewBox="0 0 16 16"><path d="M0.500 5.500h14.500v9.500h-14.500z" fill="none" stroke="#d0d0d0" stroke-width="1.100"/><path d="M3.500 5.500l4.500-4 4.500 4" fill="none" stroke="#d0d0d0" stroke-width="1.100"/></svg>
<div class="t" style="left:83px;top:788px;color:#fafafa;font-size:12px;line-height:16px;letter-spacing:-0.224px;">Frame</div>
<svg style="left:52px;top:810px;" width="14" height="14" viewBox="0 0 16 16"><path d="M2 2h3.300v3.300h-3.300zM6.400 2h3.300v3.300h-3.300zM10.800 2h3.300v3.300h-3.300zM2 6.400h3.300v3.300h-3.300zM6.400 6.400h3.300v3.300h-3.300zM10.800 6.400h3.300v3.300h-3.300zM2 10.800h3.300v3.300h-3.300zM6.400 10.800h3.300v3.300h-3.300zM10.800 10.800h3.300v3.300h-3.300z" fill="#d0d0d0"/></svg>
<div class="t" style="left:83px;top:809px;color:#fafafa;font-size:12px;line-height:16px;letter-spacing:-0.218px;">Grid</div>
<svg style="left:52px;top:831px;" width="14" height="14" viewBox="0 0 16 16"><path d="M8 0.500v15" stroke="#d0d0d0" stroke-width="1.500"/><path d="M0.500 8l3.500-3v2h2v2h-2v2zM15.500 8l-3.500-3v2h-2v2h2v2z" fill="#d0d0d0"/></svg>
<div class="t" style="left:83px;top:830px;color:#fafafa;font-size:12px;line-height:16px;letter-spacing:-0.060px;">GridSplitter</div>
<svg style="left:52px;top:852px;" width="14" height="14" viewBox="0 0 16 16"><path d="M3 3.500h-2.500v11.500h14.500v-11.500h-2.500" fill="none" stroke="#d0d0d0" stroke-width="1.100"/><path d="M4 1.500l2.500 4M6.500 1.500l-2.500 4M8.500 1.500l1.500 2 1.500-2M10 3.500v2" fill="none" stroke="#d0d0d0" stroke-width="0.900"/></svg>
<div class="t" style="left:83px;top:851px;color:#fafafa;font-size:12px;line-height:16px;letter-spacing:-0.216px;">GroupBox</div>
<svg style="left:52px;top:873px;" width="14" height="14" viewBox="0 0 16 16"><path d="M0.500 1.500h14.500v13h-14.500z" fill="none" stroke="#d0d0d0" stroke-width="1.100"/><path d="M1 14v-4.500l3.500-3 3.500 3.500 2.500-2 4 3.500v2.500z" fill="#6cbdf0"/><circle cx="11" cy="4.800" r="1.300" fill="#e8c76a"/></svg>
<div class="t" style="left:83px;top:872px;color:#fafafa;font-size:12px;line-height:16px;letter-spacing:0.039px;">Image</div>
<svg style="left:52px;top:894px;" width="14" height="14" viewBox="0 0 16 16"><path d="M1.500 15L7 1h2l5.500 14h-2.300l-1.400-3.800h-5.600l-1.400 3.800zM5.900 9.300h4.200L8 3.500z" fill="#d0d0d0"/></svg>
<div class="t" style="left:83px;top:893px;color:#fafafa;font-size:12px;line-height:16px;letter-spacing:-0.263px;">Label</div>
<svg style="left:52px;top:915px;" width="14" height="14" viewBox="0 0 16 16"><path d="M0.500 1.500h14.500v13h-14.500z" fill="none" stroke="#d0d0d0" stroke-width="1.100"/><path d="M2.500 4.500h6M2.500 7.500h4M2.500 10.500h6M2.500 12.500h3" stroke="#d0d0d0" stroke-width="1.100"/><path d="M10.500 2.500h4v5h-4zM10.500 9h4v5h-4z" fill="#6cbdf0"/><path d="M11.300 6l1.200-2 1.200 2zM11.300 10.500l1.200 2 1.200-2z" fill="#1f1f1f"/></svg>
<div class="t" style="left:83px;top:914px;color:#fafafa;font-size:12px;line-height:16px;letter-spacing:-0.293px;">ListBox</div>
<svg style="left:52px;top:936px;" width="14" height="14" viewBox="0 0 16 16"><path d="M0.500 1.500h14.500v13h-14.500z" fill="none" stroke="#d0d0d0" stroke-width="1.100"/><path d="M3 4.500h9M3 7h7M3 9.500h9M3 12h6" stroke="#d0d0d0" stroke-width="1"/></svg>
<div class="t" style="left:83px;top:935px;color:#fafafa;font-size:12px;line-height:16px;letter-spacing:-0.177px;">ListView</div>
<svg style="left:52px;top:957px;" width="14" height="14" viewBox="0 0 16 16"><path d="M0.500 2.500h14.500v11h-14.500z" fill="none" stroke="#d0d0d0" stroke-width="1.100"/><path d="M3.500 2.500v11M12 2.500v11" stroke="#d0d0d0" stroke-width="1" stroke-dasharray="1.500 1.500"/><path d="M6 5.500l4 2.500-4 2.500z" fill="none" stroke="#d0d0d0" stroke-width="1"/></svg>
<div class="t" style="left:83px;top:956px;color:#fafafa;font-size:12px;line-height:16px;letter-spacing:-0.055px;">MediaElement</div>
<svg style="left:52px;top:978px;" width="14" height="14" viewBox="0 0 16 16"><path d="M0.500 1.500h10.500v3h-10.500zM0.500 6.500h14.500v8.500h-14.500z" fill="none" stroke="#d0d0d0" stroke-width="1.100"/><path d="M2.500 9h7M2.500 12h5" stroke="#d0d0d0" stroke-width="1.100"/></svg>
<div class="t" style="left:83px;top:977px;color:#fafafa;font-size:12px;line-height:16px;letter-spacing:0.258px;">Menu</div>
<svg style="left:52px;top:999px;" width="14" height="14" viewBox="0 0 16 16"><path d="M0.500 2.500h14.500v11h-14.500z" fill="none" stroke="#d0d0d0" stroke-width="1.100"/><path d="M3 6.500l3 3M6 6.500l-3 3M4.500 6v4M8.500 6.500l3 3M11.500 6.500l-3 3M10 6v4" stroke="#d0d0d0" stroke-width="0.900"/></svg>
<div class="t" style="left:83px;top:998px;color:#fafafa;font-size:12px;line-height:16px;letter-spacing:-0.393px;">PasswordBox</div>
<div style="left:32px;top:1010px;width:187px;height:1px;background:#3d3d3d;"></div>
<div style="left:31px;top:1011px;width:189px;height:6px;background:#1f1f1f;"></div>
<div style="left:227px;top:72px;width:1459px;height:939px;background:#1e1e1e;"></div>
<div style="left:228px;top:73px;width:85px;height:19px;background:#2d2d2d;"></div>
<div class="t" style="left:232px;top:74px;color:#c0c0c0;font-size:12px;line-height:16px;">Output</div>
<div style="left:314px;top:72px;width:155px;height:21px;background:#3d3d3d;"></div>
<div style="left:314px;top:72px;width:155px;height:2px;background:#7160e8;"></div>
<div class="t b" style="left:318.5px;top:74px;color:#ffffff;font-size:12px;line-height:16px;letter-spacing:-0.008px;">MainWindow.xaml*</div>
<svg style="left:435px;top:78px;" width="10" height="10" viewBox="0 0 10 10"><path d="M0 5h3.500M3.500 2.500v5M3.500 3.500h5v3h-5M8.500 2.500v5" fill="none" stroke="#e6e6e6" stroke-width="1.100"/></svg>
<svg style="left:454px;top:78px;" width="11" height="10" viewBox="0 0 11 10"><path d="M0.700 0.700l9 8.600M9.700 0.700l-9 8.600" stroke="#e6e6e6" stroke-width="1.400"/></svg>
<div style="left:470px;top:73px;width:161px;height:19px;background:#2d2d2d;"></div>
<div class="t" style="left:474.5px;top:74px;color:#bdbdbd;font-size:12px;line-height:16px;letter-spacing:0.109px;">MainWindow.xaml.cs</div>
<svg style="left:1657px;top:82px;" width="8" height="4" viewBox="0 0 8 4"><path d="M0 0H8L4.0 4Z" fill="#e0e0e0"/></svg>
<svg style="left:1674px;top:77px;" width="10" height="10" viewBox="0 0 12 12"><circle cx="6" cy="6" r="3.600" fill="none" stroke="#e6e6e6" stroke-width="1.800"/><path d="M6 0v12M0 6h12M1.800 1.800l8.400 8.400M10.200 1.800l-8.400 8.400" stroke="#e6e6e6" stroke-width="1.500"/><circle cx="6" cy="6" r="1.500" fill="#1f1f1f"/></svg>
<div style="left:227px;top:92px;width:1458px;height:2px;background:#7160e8;"></div>
<div style="left:227px;top:94px;width:1459px;height:22px;background:#2b2b2b;"></div>
<div style="left:227px;top:95px;width:690px;height:20px;background:#383838;"></div>
<div style="left:919px;top:95px;width:686px;height:20px;background:#383838;"></div>
<div style="left:1607px;top:95px;width:78px;height:20px;background:#2e2e2e;"></div>
<svg style="left:231px;top:99px;" width="14" height="10" viewBox="0 0 14 10"><path d="M0.500 0.500h13v9h-13z" fill="none" stroke="#e0e0e0" stroke-width="1"/><path d="M4.500 3L2.800 5l1.700 2M9.500 3l1.700 2-1.700 2" fill="none" stroke="#e0e0e0" stroke-width="1"/></svg>
<div class="t" style="left:249px;top:97px;color:#fafafa;font-size:12px;line-height:16px;">Grid</div>
<svg style="left:906px;top:103px;" width="6" height="3.5" viewBox="0 0 6 3.5"><path d="M0 0H6L3.0 3.5Z" fill="#d6d6d6"/></svg>
<svg style="left:922px;top:99px;" width="14" height="10" viewBox="0 0 14 10"><path d="M0.500 0.500h13v9h-13z" fill="none" stroke="#e0e0e0" stroke-width="1"/><path d="M4.500 3L2.800 5l1.700 2M9.500 3l1.700 2-1.700 2" fill="none" stroke="#e0e0e0" stroke-width="1"/></svg>
<div class="t" style="left:940px;top:97px;color:#fafafa;font-size:12px;line-height:16px;">Grid</div>
<svg style="left:1597px;top:103px;" width="6" height="3.5" viewBox="0 0 6 3.5"><path d="M0 0H6L3.0 3.5Z" fill="#d6d6d6"/></svg>
<svg style="left:1639px;top:98px;" width="13" height="14" viewBox="0 0 13 14"><path d="M1 5.500h11M1 8.500h11M6.500 0.500v5M6.500 8.500v5M4.500 2.500l2-2 2 2M4.500 11.500l2 2 2-2" fill="none" stroke="#e6e6e6" stroke-width="1"/></svg>
<div style="left:227px;top:116px;width:1379px;height:567px;background:#1e1e1e;"></div>
<div style="left:227px;top:116px;width:25px;height:567px;background:#333333;"></div>
<div style="left:327px;top:116px;width:7.6px;height:270px;background:#57b359;"></div>
<div style="left:327px;top:385.5px;width:7.6px;height:195px;background:#1e1e1e;box-shadow:inset 0 0 0 1.500px #c39f27;"></div>
<div style="left:327px;top:580.5px;width:7.6px;height:49.5px;background:#57b359;"></div>
<div style="left:344px;top:116px;width:2px;height:563px;background:#a6a6a6;"></div>
<div style="left:345px;top:212.5px;width:6px;height:1.5px;background:#a6a6a6;"></div>
<div style="left:345px;top:261.5px;width:6px;height:1.5px;background:#a6a6a6;"></div>
<div style="left:345px;top:310.5px;width:6px;height:1.5px;background:#a6a6a6;"></div>
<div style="left:345px;top:359.5px;width:6px;height:1.5px;background:#a6a6a6;"></div>
<div style="left:345px;top:408.5px;width:6px;height:1.5px;background:#a6a6a6;"></div>
<div style="left:345px;top:579.5px;width:6px;height:1.5px;background:#a6a6a6;"></div>
<div style="left:345px;top:653.5px;width:6px;height:1.5px;background:#a6a6a6;"></div>
<div style="left:345px;top:678.0px;width:6px;height:1.5px;background:#a6a6a6;"></div>
<svg style="left:356px;top:116px;" width="4" height="540" viewBox="0 0 4 540"><path d="M2 0V540" stroke="#8c8c8c" stroke-width="1.400" stroke-dasharray="5 3.800" stroke-dashoffset="-0.500"/></svg>
<svg style="left:401px;top:116px;" width="4" height="514" viewBox="0 0 4 514"><path d="M2 0V514" stroke="#8c8c8c" stroke-width="1.400" stroke-dasharray="5 3.800" stroke-dashoffset="-0.500"/></svg>
<svg style="left:444px;top:116px;" width="4" height="269" viewBox="0 0 4 269"><path d="M2.3000000000000114 0V269" stroke="#8c8c8c" stroke-width="1.400" stroke-dasharray="5 3.800" stroke-dashoffset="-0.500"/></svg>
<svg style="left:444px;top:484px;" width="4" height="73" viewBox="0 0 4 73"><path d="M2.3000000000000114 0V73" stroke="#8c8c8c" stroke-width="1.400" stroke-dasharray="5 3.800" stroke-dashoffset="-0.500"/></svg>
<svg style="left:488px;top:116px;" width="4" height="220" viewBox="0 0 4 220"><path d="M2.3000000000000114 0V220" stroke="#8c8c8c" stroke-width="1.400" stroke-dasharray="5 3.800" stroke-dashoffset="-0.500"/></svg>
<svg style="left:532px;top:116px;" width="4" height="168" viewBox="0 0 4 168"><path d="M2 0V168" stroke="#8c8c8c" stroke-width="1.400" stroke-dasharray="5 3.800" stroke-dashoffset="-0.500"/></svg>
<svg style="left:576px;top:116px;" width="4" height="121" viewBox="0 0 4 121"><path d="M2 0V121" stroke="#8c8c8c" stroke-width="1.400" stroke-dasharray="5 3.800" stroke-dashoffset="-0.500"/></svg>
<svg style="left:620px;top:116px;" width="4" height="73" viewBox="0 0 4 73"><path d="M1.5 0V73" stroke="#8c8c8c" stroke-width="1.400" stroke-dasharray="5 3.800" stroke-dashoffset="-0.500"/></svg>
<div style="left:351px;top:605px;width:1255px;height:25px;background:transparent;box-shadow:inset 0 0 0 2px #464646;"></div>
<svg style="left:337px;top:463px;" width="15" height="15" viewBox="0 0 15 15"><path d="M1.500 1.500h12v12h-12z" fill="#1e1e1e" stroke="#a6a6a6" stroke-width="1.200"/><path d="M4 7.500h7" stroke="#d0d0d0" stroke-width="1.400"/></svg>
<div class="m" style="left:302.00px;top:117px;color:#9a9a9a;font-size:18.2px;line-height:24px;-webkit-text-stroke:0.200px currentColor;">25</div>
<div class="m" style="left:302.00px;top:141px;color:#9a9a9a;font-size:18.2px;line-height:24px;-webkit-text-stroke:0.200px currentColor;">26</div>
<div class="m" style="left:302.00px;top:166px;color:#9a9a9a;font-size:18.2px;line-height:24px;-webkit-text-stroke:0.200px currentColor;">27</div>
<div class="m" style="left:302.00px;top:190px;color:#9a9a9a;font-size:18.2px;line-height:24px;-webkit-text-stroke:0.200px currentColor;">28</div>
<div class="m" style="left:302.00px;top:215px;color:#9a9a9a;font-size:18.2px;line-height:24px;-webkit-text-stroke:0.200px currentColor;">29</div>
<div class="m" style="left:302.00px;top:239px;color:#9a9a9a;font-size:18.2px;line-height:24px;-webkit-text-stroke:0.200px currentColor;">30</div>
<div class="m" style="left:302.00px;top:264px;color:#9a9a9a;font-size:18.2px;line-height:24px;-webkit-text-stroke:0.200px currentColor;">31</div>
<div class="m" style="left:302.00px;top:288px;color:#9a9a9a;font-size:18.2px;line-height:24px;-webkit-text-stroke:0.200px currentColor;">32</div>
<div class="m" style="left:302.00px;top:312px;color:#9a9a9a;font-size:18.2px;line-height:24px;-webkit-text-stroke:0.200px currentColor;">33</div>
<div class="m" style="left:302.00px;top:337px;color:#9a9a9a;font-size:18.2px;line-height:24px;-webkit-text-stroke:0.200px currentColor;">34</div>
<div class="m" style="left:302.00px;top:361px;color:#9a9a9a;font-size:18.2px;line-height:24px;-webkit-text-stroke:0.200px currentColor;">35</div>
<div class="m" style="left:302.00px;top:386px;color:#9a9a9a;font-size:18.2px;line-height:24px;-webkit-text-stroke:0.200px currentColor;">36</div>
<div class="m" style="left:302.00px;top:410px;color:#9a9a9a;font-size:18.2px;line-height:24px;-webkit-text-stroke:0.200px currentColor;">37</div>
<div class="m" style="left:302.00px;top:435px;color:#9a9a9a;font-size:18.2px;line-height:24px;-webkit-text-stroke:0.200px currentColor;">38</div>
<div class="m" style="left:302.00px;top:459px;color:#9a9a9a;font-size:18.2px;line-height:24px;-webkit-text-stroke:0.200px currentColor;">39</div>
<div class="m" style="left:302.00px;top:484px;color:#9a9a9a;font-size:18.2px;line-height:24px;-webkit-text-stroke:0.200px currentColor;">40</div>
<div class="m" style="left:302.00px;top:508px;color:#9a9a9a;font-size:18.2px;line-height:24px;-webkit-text-stroke:0.200px currentColor;">41</div>
<div class="m" style="left:302.00px;top:532px;color:#9a9a9a;font-size:18.2px;line-height:24px;-webkit-text-stroke:0.200px currentColor;">42</div>
<div class="m" style="left:302.00px;top:557px;color:#9a9a9a;font-size:18.2px;line-height:24px;-webkit-text-stroke:0.200px currentColor;">43</div>
<div class="m" style="left:302.00px;top:581px;color:#9a9a9a;font-size:18.2px;line-height:24px;-webkit-text-stroke:0.200px currentColor;">44</div>
<div class="m" style="left:302.00px;top:606px;color:#ffffff;font-size:18.2px;line-height:24px;-webkit-text-stroke:0.500px #fff;">45</div>
<div class="m" style="left:302.00px;top:630px;color:#9a9a9a;font-size:18.2px;line-height:24px;-webkit-text-stroke:0.200px currentColor;">46</div>
<div class="m" style="left:302.00px;top:655px;color:#9a9a9a;font-size:18.2px;line-height:24px;-webkit-text-stroke:0.200px currentColor;">47</div>
<div class="m" style="left:661.21px;top:139px;color:#808080;font-size:18.2px;line-height:24px;-webkit-text-stroke:0.300px currentColor;">&lt;</div>
<div class="m" style="left:672.16px;top:139px;color:#f4f4f4;font-size:18.2px;line-height:24px;-webkit-text-stroke:0.300px currentColor;">TextBlock</div>
<div class="m" style="left:770.77px;top:139px;color:#808080;font-size:18.2px;line-height:24px;-webkit-text-stroke:0.300px currentColor;"> </div>
<div class="m" style="left:781.72px;top:139px;color:#8fc4f2;font-size:18.2px;line-height:24px;-webkit-text-stroke:0.300px currentColor;">Text</div>
<div class="m" style="left:825.55px;top:139px;color:#808080;font-size:18.2px;line-height:24px;-webkit-text-stroke:0.300px currentColor;">=</div>
<div class="m" style="left:836.50px;top:139px;color:#569cd6;font-size:18.2px;line-height:24px;-webkit-text-stroke:0.300px currentColor;">"</div>
<div class="m" style="left:847.46px;top:139px;color:#808080;font-size:18.2px;line-height:24px;-webkit-text-stroke:0.300px currentColor;">{</div>
<div class="m" style="left:858.42px;top:139px;color:#cfae82;font-size:18.2px;line-height:24px;-webkit-text-stroke:0.300px currentColor;">Binding</div>
<div class="m" style="left:935.11px;top:139px;color:#808080;font-size:18.2px;line-height:24px;-webkit-text-stroke:0.300px currentColor;"> </div>
<div style="left:947.5px;top:140.9px;width:57px;height:21px;background:#2a2a32;border-radius:2px;"></div>
<div class="m" style="left:950.50px;top:140px;color:#9a9a9a;font-size:14px;line-height:24px;letter-spacing:0.150px;">(???).</div>
<div style="left:1007.5px;top:140.9px;width:48px;height:21px;background:#2a2a32;border-radius:2px;"></div>
<div class="m" style="left:1009.50px;top:140px;color:#9a9a9a;font-size:14px;line-height:24px;letter-spacing:0.150px;">Path=</div>
<div class="m" style="left:1056.70px;top:139px;color:#e6c48d;font-size:18.2px;line-height:24px;-webkit-text-stroke:0.300px currentColor;">NomPoblacions</div>
<div class="m" style="left:1199.13px;top:139px;color:#808080;font-size:18.2px;line-height:24px;-webkit-text-stroke:0.300px currentColor;">}</div>
<div class="m" style="left:1210.08px;top:139px;color:#569cd6;font-size:18.2px;line-height:24px;-webkit-text-stroke:0.300px currentColor;">"</div>
<div class="m" style="left:1221.04px;top:139px;color:#808080;font-size:18.2px;line-height:24px;-webkit-text-stroke:0.300px currentColor;"> </div>
<div class="m" style="left:1232.00px;top:139px;color:#8fc4f2;font-size:18.2px;line-height:24px;-webkit-text-stroke:0.300px currentColor;">FontSize</div>
<div class="m" style="left:1319.64px;top:139px;color:#808080;font-size:18.2px;line-height:24px;-webkit-text-stroke:0.300px currentColor;">=</div>
<div class="m" style="left:1330.60px;top:139px;color:#569cd6;font-size:18.2px;line-height:24px;-webkit-text-stroke:0.300px currentColor;">"16"</div>
<div class="m" style="left:1374.42px;top:139px;color:#808080;font-size:18.2px;line-height:24px;-webkit-text-stroke:0.300px currentColor;">&gt;</div>
<div class="m" style="left:1385.38px;top:139px;color:#808080;font-size:18.2px;line-height:24px;-webkit-text-stroke:0.300px currentColor;">&lt;/</div>
<div class="m" style="left:1407.29px;top:139px;color:#f4f4f4;font-size:18.2px;line-height:24px;-webkit-text-stroke:0.300px currentColor;">TextBlock</div>
<div class="m" style="left:1505.90px;top:139px;color:#808080;font-size:18.2px;line-height:24px;-webkit-text-stroke:0.300px currentColor;">&gt;</div>
<div class="m" style="left:617.38px;top:188px;color:#808080;font-size:18.2px;line-height:24px;-webkit-text-stroke:0.300px currentColor;">&lt;/</div>
<div class="m" style="left:639.30px;top:188px;color:#f4f4f4;font-size:18.2px;line-height:24px;-webkit-text-stroke:0.300px currentColor;">StackPanel</div>
<div class="m" style="left:748.86px;top:188px;color:#808080;font-size:18.2px;line-height:24px;-webkit-text-stroke:0.300px currentColor;">&gt;</div>
<div class="m" style="left:573.56px;top:237px;color:#808080;font-size:18.2px;line-height:24px;-webkit-text-stroke:0.300px currentColor;">&lt;/</div>
<div class="m" style="left:595.47px;top:237px;color:#f4f4f4;font-size:18.2px;line-height:24px;-webkit-text-stroke:0.300px currentColor;">DataTemplate</div>
<div class="m" style="left:726.94px;top:237px;color:#808080;font-size:18.2px;line-height:24px;-webkit-text-stroke:0.300px currentColor;">&gt;</div>
<div class="m" style="left:529.74px;top:286px;color:#808080;font-size:18.2px;line-height:24px;-webkit-text-stroke:0.300px currentColor;">&lt;/</div>
<div class="m" style="left:551.65px;top:286px;color:#f4f4f4;font-size:18.2px;line-height:24px;-webkit-text-stroke:0.300px currentColor;">ComboBox.ItemTemplate</div>
<div class="m" style="left:781.72px;top:286px;color:#808080;font-size:18.2px;line-height:24px;-webkit-text-stroke:0.300px currentColor;">&gt;</div>
<div class="m" style="left:485.91px;top:335px;color:#808080;font-size:18.2px;line-height:24px;-webkit-text-stroke:0.300px currentColor;">&lt;/</div>
<div class="m" style="left:507.82px;top:335px;color:#f4f4f4;font-size:18.2px;line-height:24px;-webkit-text-stroke:0.300px currentColor;">ComboBox</div>
<div class="m" style="left:595.47px;top:335px;color:#808080;font-size:18.2px;line-height:24px;-webkit-text-stroke:0.300px currentColor;">&gt;</div>
<div class="m" style="left:442.09px;top:384px;color:#808080;font-size:18.2px;line-height:24px;-webkit-text-stroke:0.300px currentColor;">&lt;/</div>
<div class="m" style="left:464.00px;top:384px;color:#f4f4f4;font-size:18.2px;line-height:24px;-webkit-text-stroke:0.300px currentColor;">StackPanel</div>
<div class="m" style="left:573.56px;top:384px;color:#808080;font-size:18.2px;line-height:24px;-webkit-text-stroke:0.300px currentColor;">&gt;</div>
<div class="m" style="left:442.09px;top:458px;color:#808080;font-size:18.2px;line-height:24px;-webkit-text-stroke:0.300px currentColor;">&lt;</div>
<div class="m" style="left:453.04px;top:458px;color:#f4f4f4;font-size:18.2px;line-height:24px;-webkit-text-stroke:0.300px currentColor;">StackPanel</div>
<div class="m" style="left:562.60px;top:458px;color:#808080;font-size:18.2px;line-height:24px;-webkit-text-stroke:0.300px currentColor;"> </div>
<div class="m" style="left:573.56px;top:458px;color:#8fc4f2;font-size:18.2px;line-height:24px;-webkit-text-stroke:0.300px currentColor;">Grid.Column</div>
<div class="m" style="left:694.08px;top:458px;color:#808080;font-size:18.2px;line-height:24px;-webkit-text-stroke:0.300px currentColor;">=</div>
<div class="m" style="left:705.03px;top:458px;color:#569cd6;font-size:18.2px;line-height:24px;-webkit-text-stroke:0.300px currentColor;">"1"</div>
<div class="m" style="left:737.90px;top:458px;color:#808080;font-size:18.2px;line-height:24px;-webkit-text-stroke:0.300px currentColor;"> </div>
<div class="m" style="left:748.86px;top:458px;color:#8fc4f2;font-size:18.2px;line-height:24px;-webkit-text-stroke:0.300px currentColor;">Margin</div>
<div class="m" style="left:814.59px;top:458px;color:#808080;font-size:18.2px;line-height:24px;-webkit-text-stroke:0.300px currentColor;">=</div>
<div class="m" style="left:825.55px;top:458px;color:#569cd6;font-size:18.2px;line-height:24px;-webkit-text-stroke:0.300px currentColor;">"</div>
<div style="left:838.5px;top:458.8px;width:56px;height:21px;background:#2a2a32;border-radius:2px;"></div>
<div class="m" style="left:840.50px;top:458px;color:#a9a078;font-size:14px;line-height:24px;letter-spacing:0.150px;">[all:]</div>
<div class="m" style="left:895.50px;top:458px;color:#569cd6;font-size:18.2px;line-height:24px;-webkit-text-stroke:0.300px currentColor;">100"</div>
<div class="m" style="left:939.32px;top:458px;color:#808080;font-size:18.2px;line-height:24px;-webkit-text-stroke:0.300px currentColor;">&gt;</div>
<div class="m" style="left:485.91px;top:507px;color:#808080;font-size:18.2px;line-height:24px;-webkit-text-stroke:0.300px currentColor;">&lt;</div>
<div class="m" style="left:496.87px;top:507px;color:#f4f4f4;font-size:18.2px;line-height:24px;-webkit-text-stroke:0.300px currentColor;">Label</div>
<div class="m" style="left:551.65px;top:507px;color:#808080;font-size:18.2px;line-height:24px;-webkit-text-stroke:0.300px currentColor;"> </div>
<div class="m" style="left:562.60px;top:507px;color:#8fc4f2;font-size:18.2px;line-height:24px;-webkit-text-stroke:0.300px currentColor;">FontSize</div>
<div class="m" style="left:650.25px;top:507px;color:#808080;font-size:18.2px;line-height:24px;-webkit-text-stroke:0.300px currentColor;">=</div>
<div class="m" style="left:661.21px;top:507px;color:#569cd6;font-size:18.2px;line-height:24px;-webkit-text-stroke:0.300px currentColor;">"16"</div>
<div class="m" style="left:705.03px;top:507px;color:#808080;font-size:18.2px;line-height:24px;-webkit-text-stroke:0.300px currentColor;"> </div>
<div class="m" style="left:715.99px;top:507px;color:#8fc4f2;font-size:18.2px;line-height:24px;-webkit-text-stroke:0.300px currentColor;">FontWeight</div>
<div class="m" style="left:825.55px;top:507px;color:#808080;font-size:18.2px;line-height:24px;-webkit-text-stroke:0.300px currentColor;">=</div>
<div class="m" style="left:836.50px;top:507px;color:#569cd6;font-size:18.2px;line-height:24px;-webkit-text-stroke:0.300px currentColor;">"ExtraBold"</div>
<div class="m" style="left:957.02px;top:507px;color:#808080;font-size:18.2px;line-height:24px;-webkit-text-stroke:0.300px currentColor;">&gt;</div>
<div class="m" style="left:967.98px;top:507px;color:#c8c8c8;font-size:18.2px;line-height:24px;-webkit-text-stroke:0.300px currentColor;">Païssos</div>
<div class="m" style="left:1044.67px;top:507px;color:#808080;font-size:18.2px;line-height:24px;-webkit-text-stroke:0.300px currentColor;">&lt;/</div>
<div class="m" style="left:1066.58px;top:507px;color:#f4f4f4;font-size:18.2px;line-height:24px;-webkit-text-stroke:0.300px currentColor;">Label</div>
<div class="m" style="left:1121.36px;top:507px;color:#808080;font-size:18.2px;line-height:24px;-webkit-text-stroke:0.300px currentColor;">&gt;</div>
<div class="m" style="left:442.09px;top:556px;color:#808080;font-size:18.2px;line-height:24px;-webkit-text-stroke:0.300px currentColor;">&lt;/</div>
<div class="m" style="left:464.00px;top:556px;color:#f4f4f4;font-size:18.2px;line-height:24px;-webkit-text-stroke:0.300px currentColor;">StackPanel</div>
<div class="m" style="left:573.56px;top:556px;color:#808080;font-size:18.2px;line-height:24px;-webkit-text-stroke:0.300px currentColor;">&gt;</div>
<div class="m" style="left:398.26px;top:629px;color:#808080;font-size:18.2px;line-height:24px;-webkit-text-stroke:0.300px currentColor;">&lt;/</div>
<div class="m" style="left:420.18px;top:629px;color:#f4f4f4;font-size:18.2px;line-height:24px;-webkit-text-stroke:0.300px currentColor;">Grid</div>
<div class="m" style="left:464.00px;top:629px;color:#808080;font-size:18.2px;line-height:24px;-webkit-text-stroke:0.300px currentColor;">&gt;</div>
<div class="m" style="left:354.44px;top:653px;color:#808080;font-size:18.2px;line-height:24px;-webkit-text-stroke:0.300px currentColor;">&lt;/</div>
<div class="m" style="left:376.35px;top:653px;color:#f4f4f4;font-size:18.2px;line-height:24px;-webkit-text-stroke:0.300px currentColor;">Window</div>
<div class="m" style="left:442.09px;top:653px;color:#808080;font-size:18.2px;line-height:24px;-webkit-text-stroke:0.300px currentColor;">&gt;</div>
<svg style="left:0px;top:0px;pointer-events:none;" width="1920" height="1080" viewBox="0 0 1920 1080"><path d="M1056 162.5 q2.05 -3.600 4.10 0 q2.05 3.600 4.10 0 q2.05 -3.600 4.10 0 q2.05 3.600 4.10 0 q2.05 -3.600 4.10 0 q2.05 3.600 4.10 0 q2.05 -3.600 4.10 0 q2.05 3.600 4.10 0 q2.05 -3.600 4.10 0 q2.05 3.600 4.10 0 q2.05 -3.600 4.10 0 q2.05 3.600 4.10 0 q2.05 -3.600 4.10 0 q2.05 3.600 4.10 0 q2.05 -3.600 4.10 0 q2.05 3.600 4.10 0 q2.05 -3.600 4.10 0 q2.05 3.600 4.10 0 q2.05 -3.600 4.10 0 q2.05 3.600 4.10 0 q2.05 -3.600 4.10 0 q2.05 3.600 4.10 0 q2.05 -3.600 4.10 0 q2.05 3.600 4.10 0 q2.05 -3.600 4.10 0 q2.05 3.600 4.10 0 q2.05 -3.600 4.10 0 q2.05 3.600 4.10 0 q2.05 -3.600 4.10 0 q2.05 3.600 4.10 0 q2.05 -3.600 4.10 0 q2.05 3.600 4.10 0 q2.05 -3.600 4.10 0 q2.05 3.600 4.10 0 q2.05 -3.600 4.10 0" fill="none" stroke="#4ec9b0" stroke-width="1.400"/><path d="M1088.8 162.5 q2.05 -3.600 4.10 0 q2.05 3.600 4.10 0 q2.05 -3.600 4.10 0 q2.05 3.600 4.10 0 q2.05 -3.600 4.10 0 q2.05 3.600 4.10 0 q2.05 -3.600 4.10 0 q2.05 3.600 4.10 0 q2.05 -3.600 4.10 0 q2.05 3.600 4.10 0 q2.05 -3.600 4.10 0 q2.05 3.600 4.10 0 q2.05 -3.600 4.10 0 q2.05 3.600 4.10 0 q2.05 -3.600 4.10 0 q2.05 3.600 4.10 0 q2.05 -3.600 4.10 0 q2.05 3.600 4.10 0 q2.05 -3.600 4.10 0 q2.05 3.600 4.10 0" fill="none" stroke="#27c227" stroke-width="1.400"/><path d="M968 529.5 q2.05 -3.600 4.10 0 q2.05 3.600 4.10 0 q2.05 -3.600 4.10 0 q2.05 3.600 4.10 0 q2.05 -3.600 4.10 0 q2.05 3.600 4.10 0 q2.05 -3.600 4.10 0 q2.05 3.600 4.10 0 q2.05 -3.600 4.10 0 q2.05 3.600 4.10 0 q2.05 -3.600 4.10 0 q2.05 3.600 4.10 0 q2.05 -3.600 4.10 0 q2.05 3.600 4.10 0 q2.05 -3.600 4.10 0 q2.05 3.600 4.10 0 q2.05 -3.600 4.10 0 q2.05 3.600 4.10 0 q2.05 -3.600 4.10 0" fill="none" stroke="#12e012" stroke-width="1.400"/></svg>
<svg style="left:0px;top:0px;" width="1920" height="1080" viewBox="0 0 1920 1080"><path d="M927.0 311.0L828.4 433.7" stroke="#ffffff" stroke-width="2.2" fill="none"/><path d="M816.5 448.5L824.1 430.2L832.7 437.1Z" fill="#ffffff"/><path d="M264.0 563.0L424.4 473.7" stroke="#ffffff" stroke-width="2.2" fill="none"/><path d="M441.0 464.5L427.1 478.5L421.7 468.9Z" fill="#ffffff"/><path d="M260.0 560.5L404.5 568.4" stroke="#ffffff" stroke-width="2.2" fill="none"/><path d="M424.5 569.5L404.2 573.9L404.8 562.9Z" fill="#ffffff"/><path d="M674.0 575.0L659.3 548.8" stroke="#ffffff" stroke-width="2.2" fill="none"/><path d="M651.0 534.0L663.7 546.4L655.0 551.3Z" fill="#ffffff"/><path d="M744.0 575.0L773.1 545.6" stroke="#ffffff" stroke-width="2.2" fill="none"/><path d="M785.0 533.5L776.6 549.1L769.5 542.1Z" fill="#ffffff"/><path d="M1346.5 521.0L1151.5 519.2" stroke="#ffffff" stroke-width="2.2" fill="none"/><path d="M1132.5 519.0L1151.5 514.2L1151.5 524.2Z" fill="#ffffff"/></svg>
<div style="left:1606px;top:116px;width:80px;height:567px;background:#3e3e42;"></div>
<div style="left:1606px;top:116px;width:80px;height:17px;background:#2e2e2f;"></div>
<svg style="left:1639px;top:118px;" width="13" height="12" viewBox="0 0 13 12"><path d="M6.500 0.500L12.500 11.500H0.500Z" fill="#f5c518"/><path d="M6.500 4v4.200M6.500 9.300v1.400" stroke="#1e1e1e" stroke-width="1.400"/></svg>
<svg style="left:1640px;top:138px;" width="10" height="5" viewBox="0 0 10 5"><path d="M0 5H10L5.0 0Z" fill="#999999"/></svg>
<svg style="left:1640px;top:673px;" width="10" height="5" viewBox="0 0 10 5"><path d="M0 0H10L5.0 5Z" fill="#999999"/></svg>
<div style="left:1607px;top:203px;width:5px;height:277px;background:#57b359;"></div>
<div style="left:1611px;top:322.5px;width:73.5px;height:173px;background:#000000;border-radius:3px;box-shadow:inset 0 0 0 0.700px #888;"></div>
<div style="left:1607px;top:401px;width:5px;height:64px;background:#000;box-shadow:inset 0 0 0 1px #c39f27;"></div>
<div style="left:1607px;top:465px;width:5px;height:14px;background:#57b359;"></div>
<div style="left:1607px;top:401px;width:5px;height:12px;background:#57b359;box-shadow:inset 0 0 0 1px #c39f27;"></div>
<div style="left:1607px;top:452px;width:5px;height:12px;background:#57b359;box-shadow:inset 0 0 0 1px #c39f27;"></div>
<div style="left:1606px;top:472px;width:80px;height:2px;background:#f0f0f0;"></div>
<div style="left:1675px;top:187px;width:10px;height:2px;background:#d08a18;"></div>
<div style="left:1675px;top:274px;width:10px;height:2px;background:#2a8a2a;"></div>
<div style="left:1675px;top:334px;width:10px;height:2px;background:#d08a18;"></div>
<div style="left:1675px;top:442px;width:10px;height:2px;background:#2a8a2a;"></div>
<div style="left:1621px;top:158px;width:36px;height:1.5px;background:#569cd6;opacity:0.550;"></div>
<div style="left:1621px;top:165px;width:30px;height:1.5px;background:#569cd6;opacity:0.550;"></div>
<div style="left:1621px;top:173px;width:34px;height:1.5px;background:#569cd6;opacity:0.550;"></div>
<div style="left:1621px;top:180px;width:39px;height:1.5px;background:#569cd6;opacity:0.550;"></div>
<div style="left:1621px;top:187px;width:27px;height:1.5px;background:#4a6a8a;opacity:0.550;"></div>
<div style="left:1621px;top:194px;width:9px;height:1.5px;background:#8fb8dc;opacity:0.550;"></div>
<div style="left:1621px;top:202px;width:25px;height:1.5px;background:#8fc4f2;opacity:0.550;"></div>
<div style="left:1620px;top:209px;width:3px;height:1.5px;background:#ddd;opacity:0.550;"></div>
<div style="left:1622px;top:224px;width:13px;height:1.5px;background:#ddd;opacity:0.550;"></div>
<div style="left:1624px;top:231px;width:26px;height:1.5px;background:#c8d8e8;opacity:0.550;"></div>
<div style="left:1624px;top:238px;width:26px;height:1.5px;background:#c8d8e8;opacity:0.550;"></div>
<div style="left:1622px;top:246px;width:13px;height:1.5px;background:#ddd;opacity:0.550;"></div>
<div style="left:1622px;top:260px;width:6px;height:1.5px;background:#ddd;opacity:0.550;"></div>
<div style="left:1624px;top:275px;width:14px;height:1.5px;background:#c8d8e8;opacity:0.550;"></div>
<div style="left:1626px;top:289px;width:12px;height:1.5px;background:#ddd;opacity:0.550;"></div>
<div style="left:1628px;top:304px;width:8px;height:1.5px;background:#ddd;opacity:0.550;"></div>
<div style="left:1631px;top:319px;width:20px;height:1.5px;background:#c8d8e8;opacity:0.550;"></div>
<div style="left:1633px;top:333px;width:37px;height:1.5px;background:#d8d0c0;opacity:0.550;"></div>
<div style="left:1631px;top:348px;width:6px;height:1.5px;background:#ddd;opacity:0.550;"></div>
<div style="left:1629px;top:363px;width:7px;height:1.5px;background:#ddd;opacity:0.550;"></div>
<div style="left:1626px;top:377px;width:13px;height:1.5px;background:#ddd;opacity:0.550;"></div>
<div style="left:1624px;top:392px;width:6px;height:1.5px;background:#ddd;opacity:0.550;"></div>
<div style="left:1622px;top:406px;width:6px;height:1.5px;background:#ddd;opacity:0.550;"></div>
<div style="left:1622px;top:428px;width:22px;height:1.5px;background:#c8d8e8;opacity:0.550;"></div>
<div style="left:1624px;top:443px;width:32px;height:1.5px;background:#c8d8e8;opacity:0.550;"></div>
<div style="left:1622px;top:457px;width:6px;height:1.5px;background:#ddd;opacity:0.550;"></div>
<div style="left:1620px;top:479px;width:3px;height:1.5px;background:#ddd;opacity:0.550;"></div>
<div style="left:1618px;top:487px;width:4px;height:1.5px;background:#ddd;opacity:0.550;"></div>
<div style="left:227px;top:683px;width:1459px;height:16px;background:#2b2b2b;"></div>
<div style="left:228px;top:684px;width:59px;height:15px;background:#333333;"></div>
<div class="t" style="left:230px;top:684px;color:#f0f0f0;font-size:11.5px;line-height:14px;letter-spacing:-0.622px;">144 %</div>
<svg style="left:278px;top:690px;" width="6" height="3.5" viewBox="0 0 6 3.5"><path d="M0 0H6L3.0 3.5Z" fill="#d6d6d6"/></svg>
<svg style="left:293px;top:686px;" width="5" height="9" viewBox="0 0 5 9"><path d="M5 0V9L0 4.5Z" fill="#999999"/></svg>
<div style="left:304px;top:687px;width:1006px;height:8px;background:#4d4d4d;"></div>
<svg style="left:1485px;top:686px;" width="5" height="9" viewBox="0 0 5 9"><path d="M0 0V9L5 4.5Z" fill="#999999"/></svg>
<div class="t" style="left:1518px;top:684px;color:#f0f0f0;font-size:11.5px;line-height:14px;letter-spacing:-0.412px;">Ln: 45</div>
<div class="t" style="left:1566px;top:684px;color:#f0f0f0;font-size:11.5px;line-height:14px;letter-spacing:-0.297px;">Ch: 9</div>
<div style="left:1601px;top:684px;width:38px;height:14px;background:#2b2b2b;box-shadow:inset 0 0 0 1px #3a3a3a;"></div>
<div style="left:1640px;top:684px;width:44px;height:14px;background:#2b2b2b;box-shadow:inset 0 0 0 1px #3a3a3a;"></div>
<div class="t" style="left:1611px;top:684px;color:#f0f0f0;font-size:11px;line-height:14px;letter-spacing:-1.040px;">SPC</div>
<div class="t" style="left:1650.5px;top:684px;color:#f0f0f0;font-size:11px;line-height:14px;letter-spacing:-0.931px;">CRLF</div>
<div style="left:227px;top:699px;width:1459px;height:22px;background:#2d2d2d;"></div>
<svg style="left:235px;top:699px;" width="80" height="21" viewBox="0 0 80 21"><path d="M1 0h78L62 19.500a3 3 0 0 1-2 1H4a3 3 0 0 1-3-3z" fill="#3a3a3a"/></svg>
<svg style="left:242px;top:705px;" width="10" height="10" viewBox="0 0 10 10"><path d="M0.500 0.500h10v10h-10z" fill="none" stroke="#e0e0e0" stroke-width="1"/><path d="M4.500 3.500L3 5.500l1.500 2M6.500 3.500L8 5.500l-1.500 2" fill="none" stroke="#e0e0e0" stroke-width="0.900"/></svg>
<div class="t" style="left:255px;top:700px;color:#f0f0f0;font-size:12px;line-height:16px;letter-spacing:-0.170px;">XAML</div>
<svg style="left:315px;top:703px;" width="12" height="12" viewBox="0 0 12 12"><path d="M3 11.500V1.500M0.500 4L3 1.500 5.500 4M9 0.500v10M6.500 8L9 10.500 11.500 8" fill="none" stroke="#f0f0f0" stroke-width="1.300"/></svg>
<svg style="left:339px;top:701px;" width="69" height="19" viewBox="0 0 69 19"><path d="M17 0h49a3 3 0 0 1 3 3v16H0z" fill="#303030"/></svg>
<svg style="left:352px;top:706px;" width="12" height="12" viewBox="0 0 12 12"><path d="M0.500 0.500h9v9h-9z" fill="none" stroke="#e0e0e0" stroke-width="1"/><path d="M2.500 2.500h5v5h-5z" fill="#e0e0e0"/><circle cx="9" cy="9" r="2.300" fill="#2d2d2d" stroke="#e0e0e0" stroke-width="1"/></svg>
<div class="t" style="left:366px;top:704px;color:#f0f0f0;font-size:12px;line-height:16px;letter-spacing:-0.226px;">Design</div>
<svg style="left:415px;top:705px;" width="12" height="12" viewBox="0 0 12 12"><path d="M5.500 1.500h-5v9h10v-4" fill="none" stroke="#e0e0e0" stroke-width="1.100"/><path d="M6 6l5-5M7.500 0.500h4v4" fill="none" stroke="#3aa0f3" stroke-width="1.400"/></svg>
<svg style="left:1640px;top:704px;" width="11" height="11" viewBox="0 0 11 11"><path d="M0.500 0.500h10v10h-10zM5.500 2.500v6" fill="none" stroke="#f0f0f0" stroke-width="1.100"/></svg>
<div style="left:1653px;top:702px;width:15px;height:15px;background:#2d2d2d;box-shadow:inset 0 0 0 1px #555;"></div>
<svg style="left:1655px;top:704px;" width="11" height="11" viewBox="0 0 11 11"><path d="M0.500 0.500h10v10h-10zM2.500 5.500h6" fill="none" stroke="#f0f0f0" stroke-width="1.100"/></svg>
<svg style="left:1670px;top:704px;" width="11" height="11" viewBox="0 0 11 11"><path d="M0.500 0.500h10v10h-10z" fill="none" stroke="#f0f0f0" stroke-width="1.100"/><path d="M3 2.500l2.500 2.500 2.500-2.500M3 5.500l2.500 2.500 2.500-2.500" fill="none" stroke="#f0f0f0" stroke-width="1.100"/></svg>
<div style="left:227px;top:721px;width:1441px;height:270px;background:#1b1b1b;"></div>
<div style="left:1668px;top:721px;width:18px;height:270px;background:#2d2d2d;"></div>
<svg style="left:1672px;top:726px;" width="9" height="5" viewBox="0 0 9 5"><path d="M0 5H9L4.5 0Z" fill="#999999"/></svg>
<div style="left:1672px;top:746px;width:9px;height:104px;background:#4d4d4d;"></div>
<svg style="left:1672px;top:981px;" width="9" height="5" viewBox="0 0 9 5"><path d="M0 0H9L4.5 5Z" fill="#999999"/></svg>
<div style="left:507px;top:758px;width:882px;height:233px;background:#000000;"></div>
<div style="left:508px;top:759.5px;width:880px;height:17px;background:#424242;"></div>
<div style="left:508px;top:776px;width:881px;height:1px;background:#6a9cf0;"></div>
<div style="left:507px;top:776px;width:1.5px;height:215px;background:#6a9cf0;"></div>
<div style="left:1387.3px;top:776px;width:1.5px;height:215px;background:#6a9cf0;"></div>
<div style="left:508.5px;top:777px;width:879px;height:214px;background:#ffffff;"></div>
<div style="left:892px;top:770px;width:1.5px;height:221px;background:#6a9cf0;"></div>
<svg style="left:508px;top:768px;" width="880" height="1" viewBox="0 0 880 1"><path d="M0 0.500H880" stroke="#7aa7f5" stroke-width="1" stroke-dasharray="1 1.500"/></svg>
<svg style="left:499px;top:776px;" width="1" height="215" viewBox="0 0 1 215"><path d="M0.500 0V215" stroke="#7aa7f5" stroke-width="1" stroke-dasharray="1 1.500"/></svg>
<div style="left:496px;top:775px;width:10px;height:1px;background:#6a9cf0;"></div>
<div style="left:507px;top:764px;width:1px;height:8px;background:#6a9cf0;"></div>
<div style="left:504px;top:772.5px;width:3.5px;height:3.5px;background:#ffffff;box-shadow:0 0 0 0.800px #6a9cf0;"></div>
<div style="left:1388.5px;top:772.5px;width:3.5px;height:3.5px;background:#ffffff;box-shadow:0 0 0 0.800px #6a9cf0;"></div>
<div style="left:1387px;top:764px;width:1px;height:8px;background:#6a9cf0;"></div>
<div class="t" style="left:525px;top:761px;color:#ffffff;font-size:13.3px;line-height:16px;letter-spacing:0.087px;">MainWindow</div>
<div style="left:687.5px;top:760px;width:24px;height:16px;background:#ffffff;"></div>
<div class="t" style="left:690px;top:760px;color:#6a9cf0;font-size:12px;line-height:16px;letter-spacing:-0.174px;">350</div>
<div style="left:1131px;top:760px;width:16px;height:16px;background:#ffffff;"></div>
<div class="t" style="left:1134px;top:760px;color:#6a9cf0;font-size:12.5px;line-height:16px;">1*</div>
<svg style="left:887px;top:762px;" width="11" height="8" viewBox="0 0 11 8"><path d="M0.500 0.500h10L5.500 7.500Z" fill="#ffffff" stroke="#6a9cf0" stroke-width="1"/></svg>
<svg style="left:943px;top:767px;" width="8" height="17" viewBox="0 0 8 17"><path d="M1.500 5V3.500a2.500 2.500 0 0 1 5 0V13a2 2 0 0 1-4 0v-2" fill="none" stroke="#555" stroke-width="1.300"/><path d="M1.500 3.500a2.500 2.500 0 0 1 5 0V9" fill="none" stroke="#e8e8e8" stroke-width="1.300"/><path d="M3 5h2.500v4H3z" fill="#6a9cf0"/></svg>
<div style="left:1345px;top:761.5px;width:10.5px;height:10.5px;background:#2b2b2b;"></div>
<div style="left:1360px;top:761.5px;width:11px;height:10.5px;background:#2b2b2b;"></div>
<div style="left:1374.5px;top:761.5px;width:12px;height:10.5px;background:#2b2b2b;"></div>
<div style="left:1355px;top:743.5px;width:31px;height:22px;background:#e6e8f5;"></div>
<svg style="left:1362px;top:747px;" width="11" height="15" viewBox="0 0 11 15"><path d="M5.500 0.500a4.500 4.500 0 0 1 3 8c-0.700 0.700-1 1.300-1 2.500h-4c0-1.200-0.300-1.800-1-2.500a4.500 4.500 0 0 1 3-8z" fill="#ffc800"/><path d="M4 4.500h3M4.700 4.500l0.500 4M6.300 4.500l-0.500 4" fill="none" stroke="#fff2b0" stroke-width="0.800"/><path d="M4 11.500h3v2.500h-3z" fill="#9a9a9a"/></svg>
<svg style="left:1378px;top:750px;" width="5" height="9" viewBox="0 0 5 9"><path d="M0 0v9l5-4.500z" fill="#3a3a3a"/></svg>
<div style="left:508.5px;top:777.5px;width:384px;height:23px;background:linear-gradient(#f2f2f2,#e4e4e4);box-shadow:inset 0 -1px 0 #ababab, inset 0 1px 0 #d8d8d8;"></div>
<svg style="left:879px;top:785px;" width="7" height="5" viewBox="0 0 7 5"><path d="M0.700 0.700L3.500 3.700 6.300 0.700" fill="none" stroke="#444" stroke-width="1.300"/></svg>
<div class="t b" style="left:1009.5px;top:894px;color:#000000;font-size:17px;line-height:22px;-webkit-text-stroke:0.600px #000;letter-spacing:-0.252px;">Païssos</div>
<div style="left:227px;top:991px;width:1459px;height:19px;background:#2d2d2d;"></div>
<div style="left:227px;top:991px;width:62px;height:18px;background:#333333;"></div>
<div style="left:282px;top:992px;width:1px;height:17px;background:#2b2b2b;"></div>
<div class="t" style="left:233px;top:994px;color:#f0f0f0;font-size:12px;line-height:16px;letter-spacing:-0.200px;">110%</div>
<svg style="left:280px;top:998px;" width="6" height="3.5" viewBox="0 0 6 3.5"><path d="M0 0H6L3.0 3.5Z" fill="#e0e0e0"/></svg>
<svg style="left:295px;top:995px;" width="11" height="12" viewBox="0 0 11 12"><path d="M8.500 3.200A4 4 0 1 0 9.500 7" fill="none" stroke="#d6d6d6" stroke-width="1.600"/><path d="M6 0.500l3.500 3-4 1z" fill="#d6d6d6"/></svg>
<div style="left:312px;top:992px;width:21px;height:16.5px;background:#1f1f1f;box-shadow:inset 0 0 0 1px #7160e8;"></div>
<div class="t" style="left:316px;top:992px;color:#e8e8e8;font-size:15px;line-height:17px;font-family:'Liberation Serif',serif;font-style:italic;letter-spacing:-0.300px;">fx</div>
<svg style="left:339px;top:996px;" width="14" height="10" viewBox="0 0 14 10"><path d="M0 0h4v4h-4zM5 0h4v4h-4zM10 0h4v4h-4zM0 5.500h4v4h-4zM5 5.500h4v4h-4zM10 5.500h4v4h-4z" fill="#e0e0e0"/></svg>
<svg style="left:362px;top:996px;" width="14" height="10" viewBox="0 0 14 10"><path d="M0 0h4v4h-4zM10 0h4v4h-4zM0 5.500h4v4h-4zM10 5.500h4v4h-4z" fill="#e0e0e0"/><circle cx="7" cy="4.700" r="3.300" fill="none" stroke="#e0e0e0" stroke-width="1.400"/></svg>
<svg style="left:386px;top:995px;" width="12" height="12" viewBox="0 0 12 12"><path d="M0 0h12v12h-12z" fill="#c8c8c8"/><path d="M1 1h2v2h-2zM3 3h2v2h-2zM5 5h2v2h-2zM7 7h2v2h-2zM9 9h2v2h-2zM5 1h1v1h-1zM1 5h1v1h-1z" fill="#333"/></svg>
<div style="left:404px;top:992px;width:21px;height:16.5px;background:#1f1f1f;box-shadow:inset 0 0 0 1px #7160e8;"></div>
<svg style="left:408px;top:995px;" width="14" height="12" viewBox="0 0 14 12"><circle cx="5" cy="6" r="1.800" fill="none" stroke="#e8e8e8" stroke-width="1.100"/><path d="M5 0.500v3.500M5 8v3.500M0 6h3M7 6h7" stroke="#e8e8e8" stroke-width="1.100"/></svg>
<div style="left:427.5px;top:992px;width:21px;height:16.5px;background:#1f1f1f;box-shadow:inset 0 0 0 1px #7160e8;"></div>
<svg style="left:431px;top:994px;" width="14" height="14" viewBox="0 0 14 14"><path d="M3.500 8V0.500h5l3 3V11" fill="none" stroke="#e8e8e8" stroke-width="1.100"/><path d="M6 2.500v3h3" fill="none" stroke="#e8e8e8" stroke-width="1"/><path d="M5 9.500h4v4h-4z" fill="#3aa0f3"/><path d="M3 9.500l-2 2 2 2M11 9.500l2 2-2 2" fill="none" stroke="#e8e8e8" stroke-width="1"/></svg>
<svg style="left:456px;top:996px;" width="5" height="9" viewBox="0 0 5 9"><path d="M5 0V9L0 4.5Z" fill="#999999"/></svg>
<div style="left:605px;top:996px;width:907px;height:9px;background:#4d4d4d;"></div>
<svg style="left:1657px;top:996px;" width="5" height="9" viewBox="0 0 5 9"><path d="M0 0V9L5 4.5Z" fill="#999999"/></svg>
<div style="left:227px;top:1010px;width:1459px;height:1px;background:#3d3d3d;"></div>
<div style="left:1685px;top:94px;width:1px;height:917px;background:#3d3d3d;"></div>
<div style="left:226px;top:94px;width:1px;height:917px;background:#2a2a2a;"></div>
<div style="left:1692px;top:72px;width:222px;height:939px;background:#1f1f1f;box-shadow:inset 0 0 0 1px #3d3d3d;"></div>
<div class="t" style="left:1697px;top:76px;color:#d0d0d0;font-size:12px;line-height:16px;letter-spacing:-0.052px;">Solution Explorer</div>
<svg style="left:1865px;top:81px;" width="8" height="4" viewBox="0 0 8 4"><path d="M0 0H8L4.0 4Z" fill="#d0d0d0"/></svg>
<svg style="left:1880px;top:77px;" width="9" height="13" viewBox="0 0 9 13"><path d="M2.500 0.500h4v6.500h-4zM6 0.500v6.500M0.500 7.500h8M4.500 7.500v5" fill="none" stroke="#d0d0d0" stroke-width="1.100"/></svg>
<svg style="left:1897px;top:78px;" width="10" height="10" viewBox="0 0 10 10"><path d="M0.700 0.700l8.600 8.600M9.300 0.700l-8.600 8.600" stroke="#d6d6d6" stroke-width="1.400"/></svg>
<svg style="left:1700px;top:100px;" width="14" height="14" viewBox="0 0 14 14"><circle cx="7" cy="7" r="6.200" fill="none" stroke="#3f3f3f" stroke-width="1.200"/><path d="M10.500 7H4M6.500 4.200L3.700 7l2.800 2.800" fill="none" stroke="#3f3f3f" stroke-width="1.200"/></svg>
<svg style="left:1722px;top:100px;" width="14" height="14" viewBox="0 0 14 14"><circle cx="7" cy="7" r="6.200" fill="none" stroke="#3f3f3f" stroke-width="1.200"/><path d="M3.500 7H10M7.500 4.200L10.300 7 7.500 9.800" fill="none" stroke="#3f3f3f" stroke-width="1.200"/></svg>
<svg style="left:1744px;top:100px;" width="16" height="15" viewBox="0 0 16 15"><path d="M1 7.500L8 1l7 6.500M3 6.500v8h3.500v-4.500h3v4.500h3.500v-8" fill="none" stroke="#d6d6d6" stroke-width="1.200"/></svg>
<svg style="left:1765px;top:100px;" width="18" height="17" viewBox="0 0 18 17"><path d="M7.500 5v-4.500h9.500v11h-5" fill="none" stroke="#d6d6d6" stroke-width="1"/><path d="M10 3.500h5M10 6h5M10 8.500h5" stroke="#d6d6d6" stroke-width="1"/><path d="M8.500 7.500l1.500 0.700v7.600l-1.500 0.700-4-4-2 1.600-1-0.500v-3.800l1-0.500 2 1.600zM8.500 10.300l-2.200 1.700 2.200 1.700zM2.200 10.800v2.400l1.300-1.200z" fill="#8a63d2" fill-rule="evenodd"/></svg>
<div style="left:1788px;top:98px;width:1px;height:20px;background:#3f3f3f;"></div>
<svg style="left:1797px;top:99px;" width="16" height="17" viewBox="0 0 16 17"><circle cx="8.500" cy="10" r="5" fill="none" stroke="#d6d6d6" stroke-width="1.200"/><path d="M8.500 7v3.300h2.800" fill="none" stroke="#d6d6d6" stroke-width="1.100"/><path d="M0.500 1h5L3 4.500z" fill="#3aa0f3"/></svg>
<svg style="left:1819px;top:106px;" width="6" height="3.5" viewBox="0 0 6 3.5"><path d="M0 0H6L3.0 3.5Z" fill="#d6d6d6"/></svg>
<svg style="left:1832px;top:102px;" width="14" height="11" viewBox="0 0 14 11"><path d="M0.500 3h12M9.500 0.500l3 2.500M13 8h-12M4 10.500l-3-2.500" fill="none" stroke="#d6d6d6" stroke-width="1.200"/></svg>
<svg style="left:1853px;top:100px;" width="16" height="15" viewBox="0 0 16 15"><path d="M3.500 2.500v-2h12v11h-2" fill="none" stroke="#d6d6d6" stroke-width="1.100"/><path d="M0.500 3.500h12v11h-12z" fill="none" stroke="#d6d6d6" stroke-width="1.100"/><path d="M3.500 9h6" stroke="#d6d6d6" stroke-width="1.200"/></svg>
<svg style="left:1875px;top:100px;" width="16" height="15" viewBox="0 0 16 15"><path d="M4.500 4v-3.500h9v8.500h-3" fill="none" stroke="#d6d6d6" stroke-width="1.100"/><path d="M0.500 4.500h9v10h-9z" fill="none" stroke="#d6d6d6" stroke-width="1.100"/><path d="M3 6.500h8.500v6h-5" fill="none" stroke="#d6d6d6" stroke-width="1"/></svg>
<svg style="left:1905px;top:98px;" width="7" height="4" viewBox="0 0 7 4"><path d="M0.500 0.500l2 1.500-2 1.500zM4 0.500l2 1.500-2 1.500z" fill="#e0e0e0"/></svg>
<div style="left:1693px;top:122.5px;width:220px;height:20.5px;background:#383838;"></div>
<div class="t" style="left:1698px;top:125px;color:#d0d0d0;font-size:12px;line-height:16px;letter-spacing:-0.198px;">Search Solution Explorer</div>
<svg style="left:1885px;top:125px;" width="14" height="14" viewBox="0 0 14 14"><circle cx="8.800" cy="5" r="3.400" fill="none" stroke="#d0d0d0" stroke-width="1.700"/><path d="M6.300 7.500L1 12.800" stroke="#d0d0d0" stroke-width="2.200"/></svg>
<svg style="left:1903px;top:131px;" width="6" height="3.5" viewBox="0 0 6 3.5"><path d="M0 0H6L3.0 3.5Z" fill="#d0d0d0"/></svg>
<svg style="left:1707px;top:148px;" width="16" height="15" viewBox="0 0 16 15"><path d="M0.500 12.500v-12h14v7" fill="none" stroke="#d6d6d6" stroke-width="1"/><path d="M0.500 3.500h14" stroke="#d6d6d6" stroke-width="1"/><path d="M12.500 6.500l2 0.900v6.200l-2 0.900-4-3.500-1.700 1.300-0.800-0.400v-2.800l0.800-0.400 1.700 1.300zM12.500 9l-1.900 1.500 1.900 1.500z" fill="#8a63d2" fill-rule="evenodd"/></svg>
<div class="t" style="left:1728px;top:147px;color:#fafafa;font-size:12px;line-height:16px;letter-spacing:-0.128px;">Solution 'S11 ComboBoxCheckBox</div>
<div style="left:1693px;top:164px;width:220px;height:19.5px;background:#3d3d3d;"></div>
<svg style="left:1705px;top:171px;" width="7" height="7" viewBox="0 0 7 7"><path d="M6.500 0v6.500h-6.500z" fill="#e0e0e0"/></svg>
<svg style="left:1726px;top:167px;" width="15" height="14" viewBox="0 0 15 14"><path d="M0.500 0.500h14v13h-14z" fill="#1f1f1f" stroke="#d6d6d6" stroke-width="1"/></svg>
<div class="t b" style="left:1728px;top:169px;color:#5ccf5c;font-size:9px;line-height:10px;letter-spacing:-0.300px;">C#</div>
<div class="t b" style="left:1746px;top:166px;color:#ffffff;font-size:12px;line-height:16px;letter-spacing:-0.286px;">S11 ComboBoxCheckBox</div>
<svg style="left:1721px;top:188px;" width="6" height="10" viewBox="0 0 6 10"><path d="M0.700 0.800v8.400l4.600-4.200z" fill="none" stroke="#d0d0d0" stroke-width="1"/></svg>
<svg style="left:1742px;top:186px;" width="17" height="14" viewBox="0 0 17 14"><path d="M0.500 4.500h4v4h-4zM10.500 1.500h5v4h-5zM6.500 8.500h5v4h-5zM4.500 6.500h2v2M8.500 8.500v-5h2" fill="none" stroke="#d6d6d6" stroke-width="1.100"/></svg>
<div class="t" style="left:1764px;top:185px;color:#fafafa;font-size:12px;line-height:16px;letter-spacing:-0.227px;">Dependencies</div>
<svg style="left:1721px;top:207px;" width="6" height="10" viewBox="0 0 6 10"><path d="M0.700 0.800v8.400l4.600-4.200z" fill="none" stroke="#d0d0d0" stroke-width="1"/></svg>
<svg style="left:1742px;top:204px;" width="16" height="16" viewBox="0 0 16 16"><path d="M3.500 8V0.500h7l4 4v10.500h-3" fill="none" stroke="#d6d6d6" stroke-width="1.100"/><path d="M5 11.500h3.500v3.500h-3.500z" fill="#3aa0f3"/><path d="M3 10.500l-2 2.500 2 2.500M10.500 10.500l2 2.500-2 2.500" fill="none" stroke="#d6d6d6" stroke-width="1"/></svg>
<div class="t" style="left:1764px;top:204px;color:#fafafa;font-size:12px;line-height:16px;letter-spacing:0.122px;">App.xaml</div>
<div class="t" style="left:1743px;top:225px;color:#5ccf5c;font-size:11px;line-height:12px;letter-spacing:0.300px;">C#</div>
<div class="t" style="left:1764px;top:223px;color:#fafafa;font-size:12px;line-height:16px;letter-spacing:-0.091px;">AssemblyInfo.cs</div>
<svg style="left:1721px;top:245px;" width="6" height="10" viewBox="0 0 6 10"><path d="M0.700 0.800v8.400l4.600-4.200z" fill="none" stroke="#d0d0d0" stroke-width="1"/></svg>
<svg style="left:1742px;top:242px;" width="16" height="16" viewBox="0 0 16 16"><path d="M3.500 8V0.500h7l4 4v10.500h-3" fill="none" stroke="#d6d6d6" stroke-width="1.100"/><path d="M5 11.500h3.500v3.500h-3.500z" fill="#3aa0f3"/><path d="M3 10.500l-2 2.500 2 2.500M10.500 10.500l2 2.500-2 2.500" fill="none" stroke="#d6d6d6" stroke-width="1"/></svg>
<div class="t" style="left:1764px;top:242px;color:#fafafa;font-size:12px;line-height:16px;letter-spacing:0.220px;">MainWindow.xaml</div>
<div style="left:1693px;top:973px;width:220px;height:18px;background:#2d2d2d;"></div>
<svg style="left:1699px;top:977px;" width="5" height="9" viewBox="0 0 5 9"><path d="M5 0V9L0 4.5Z" fill="#999999"/></svg>
<div style="left:1710px;top:977px;width:135px;height:9px;background:#4d4d4d;"></div>
<svg style="left:1902px;top:977px;" width="5" height="9" viewBox="0 0 5 9"><path d="M0 0V9L5 4.5Z" fill="#999999"/></svg>
<div style="left:1692px;top:991px;width:101.5px;height:20px;background:#1f1f1f;box-shadow:inset 0 0 0 1px #3d3d3d;"></div>
<div style="left:1693px;top:990px;width:99.5px;height:2px;background:#1f1f1f;"></div>
<div class="t" style="left:1698px;top:992px;color:#fafafa;font-size:12px;line-height:16px;letter-spacing:-0.082px;">Solution Explorer</div>
<div class="t" style="left:1800px;top:992px;color:#a0a0a0;font-size:12px;line-height:16px;letter-spacing:-0.073px;">Diagnostic Tools</div>
<div style="left:1793px;top:1010px;width:121px;height:1px;background:#1f1f1f;"></div>
<div style="left:1793px;top:991px;width:121px;height:1px;background:#3d3d3d;"></div>
<div style="left:1913px;top:991px;width:1px;height:20px;background:#1f1f1f;"></div>
<div style="left:0px;top:1017px;width:1920px;height:23px;background:#424242;"></div>
<svg style="left:4px;top:1021px;" width="17" height="16" viewBox="0 0 17 16"><path d="M1 0.500h14.500v10.500h-5.500l-2.500 3-2.500-3h-4z" fill="none" stroke="#d6d6d6" stroke-width="1.100"/></svg>
<div class="t" style="left:28px;top:1021px;color:#f4f4f4;font-size:12px;line-height:16px;">Ready</div>
<svg style="left:1491px;top:1021px;" width="12" height="15" viewBox="0 0 12 15"><path d="M6 14.500V1M1 6L6 1l5 5" fill="none" stroke="#e6e6e6" stroke-width="1.100"/></svg>
<div class="t" style="left:1512px;top:1021px;color:#f4f4f4;font-size:12px;line-height:16px;letter-spacing:-0.003px;">Add to Source Control</div>
<svg style="left:1636px;top:1026.5px;" width="8" height="4" viewBox="0 0 8 4"><path d="M0 4H8L4.0 0Z" fill="#f0f0f0"/></svg>
<svg style="left:1667px;top:1022px;" width="14" height="14" viewBox="0 0 14 14"><path d="M0.500 0.500h13v3h-13zM1.500 3.500v10h11v-10" fill="none" stroke="#e0e0e0" stroke-width="1.100"/><path d="M4.500 6v5.500h5V6M7 6v3" fill="none" stroke="#e0e0e0" stroke-width="1.100"/></svg>
<div class="t" style="left:1688px;top:1021px;color:#f4f4f4;font-size:12px;line-height:16px;letter-spacing:-0.238px;">Select Repository</div>
<svg style="left:1784px;top:1026.5px;" width="8" height="4" viewBox="0 0 8 4"><path d="M0 4H8L4.0 0Z" fill="#f0f0f0"/></svg>
<svg style="left:1813px;top:1020px;" width="14" height="16" viewBox="0 0 14 16"><path d="M2 11.500c1.500-1.500 1-3.500 1.300-6a3.700 3.700 0 0 1 7.400 0c0.300 2.500-0.200 4.500 1.300 6z" fill="none" stroke="#d6d6d6" stroke-width="1.100"/><path d="M5.500 13.500a1.500 1.500 0 0 0 3 0" fill="none" stroke="#d6d6d6" stroke-width="1"/></svg>
<div style="left:1822px;top:1027px;width:10px;height:10px;background:#f08a9a;border-radius:5px;"></div>
<div class="t" style="left:1824.5px;top:1027px;color:#3a1010;font-size:9.5px;line-height:10px;">3</div>
<svg style="left:1854px;top:1020px;" width="14" height="16" viewBox="0 0 14 16"><path d="M1.500 8.500h3.500v4h5l-3 3v-3h-5.500z" fill="none" stroke="#e0e0e0" stroke-width="1"/><path d="M9 1l1.500 0.300-1 6-2.500-0.300zM6.500 8.500l3 0.400-0.300 2-3-0.400z" fill="#f5c518"/></svg>
<svg style="left:1877px;top:1022px;" width="15" height="13" viewBox="0 0 15 13"><path d="M0 0h15L7.500 13z" fill="#3fb950"/><path d="M4 2.500L7.500 9 11 2.500" fill="none" stroke="#ffffff" stroke-width="1.600"/></svg>
<svg style="left:1898px;top:1019px;" width="19" height="19" viewBox="0 0 19 19"><circle cx="9.500" cy="9.500" r="8" fill="#2b2b2b" stroke="#d0d0d0" stroke-width="1"/></svg>
<div style="left:0px;top:1040px;width:1920px;height:40px;background:#1d1d1d;"></div>
<svg style="left:16px;top:1052px;" width="17" height="17" viewBox="0 0 17 17"><path d="M0 2.400l6.900-0.950v6.650H0zM7.700 1.350L16.900 0v8.100H7.700zM0 8.900h6.900v6.650L0 14.600zM7.700 8.900h9.200V17l-9.200-1.300z" fill="#ffffff"/></svg>
<div style="left:48px;top:1040px;width:288px;height:40px;background:#2e2e2e;box-shadow:inset 0 1px 0 #4d4d4d, inset 1px 0 0 #4d4d4d, inset -1px 0 0 #3a3a3a;"></div>
<svg style="left:59px;top:1050px;" width="18" height="18" viewBox="0 0 18 18"><circle cx="11" cy="6.500" r="5.200" fill="none" stroke="#e6e6e6" stroke-width="1.200"/><path d="M7.300 10.300L1 16.700" stroke="#e6e6e6" stroke-width="1.300"/></svg>
<div class="t" style="left:88px;top:1051px;color:#d8d8d8;font-size:15px;line-height:20px;letter-spacing:-0.260px;">Escriu aquí per cercar</div>
<svg style="left:256px;top:1041px;" width="80" height="39" viewBox="0 0 80 39"><path d="M1 39L41 24.500h39V39z" fill="#e6c59d"/><path d="M1 39L41 24.500h39v2.500H44L8 39z" fill="#f0d6b3"/><g transform="rotate(-17 27 21)"><path d="M13 11.500h28v19.500H13z" fill="#43a047"/><path d="M14 10c5-1.500 9-1 13 1.500v18c-4-2.500-8-3-13-1.500z" fill="#f6f3fa"/><path d="M27 11.500c4-2.500 8-3 13-1.500v18c-5-1.500-9-1-13 1.500z" fill="#e9e4f0"/><path d="M16 14c3-0.800 6-0.500 9 1M16 17.500c3-0.800 6-0.500 9 1M16 21c3-0.800 6-0.500 9 1M16 24.500c3-0.800 6-0.500 9 1M29 15c3-1.500 6-1.800 9-1M29 18.500c3-1.500 6-1.800 9-1M29 22c3-1.500 6-1.800 9-1" fill="none" stroke="#b9b3c4" stroke-width="0.800"/></g><path d="M31.500 20.500l9.500-11 3 2.600-9.500 11-4 1.500z" fill="#f7b53c"/><path d="M41 9.500l1.800-2.200a1.500 1.500 0 0 1 2-0.200l1 0.900a1.500 1.500 0 0 1 0.200 2L44 12.100z" fill="#f0625d"/><path d="M31.500 20.500l3 2.600-4 1.500z" fill="#f3d9b8"/><path d="M55 4.500c1-2.500 3-3.500 5.500-3.500s4.500 1 5.500 3.500" fill="none" stroke="#1877f2" stroke-width="1.800"/><path d="M50.500 17C50.500 8.500 54.500 4 60.500 4s10 4.500 10 13v13.500c0 2.200-1.300 3.500-3.500 3.500h-13c-2.200 0-3.500-1.300-3.500-3.500z" fill="#1e88ff"/><path d="M51.500 14C53 7.500 56.500 5 60.500 5s7.500 2.500 9 9" fill="none" stroke="#5aa9ff" stroke-width="1"/><path d="M52.500 25c0-4.500 3.500-7 8-7s8 2.500 8 7v6c0 1.800-1 2.600-2.600 2.600H55.100c-1.600 0-2.600-0.800-2.600-2.600z" fill="#0a63e0"/><path d="M53.500 29.500h14" stroke="#c98cf5" stroke-width="1.400"/><path d="M53 29v-3" stroke="#e8eefc" stroke-width="1.200"/></svg>
<svg style="left:352px;top:1051px;" width="17" height="18" viewBox="0 0 17 18"><path d="M0.500 1h11M0.500 17h11M1.500 4.500h10v9h-10z" fill="none" stroke="#ffffff" stroke-width="1.300"/><path d="M15.500 1v16" stroke="#ffffff" stroke-width="1.300"/><path d="M14 5h3v3h-3z" fill="#ffffff"/></svg>
<svg style="left:399px;top:1048px;" width="24" height="24" viewBox="0 0 24 24"><rect x="0" y="0" width="24" height="24" rx="3" fill="#fb7a24"/><path d="M5 7.500c0-2 1.500-3 3-3s2.500 0.800 4 2.500c1.500-1.700 2.500-2.500 4-2.500s3 1 3 3-1 3-2.500 4.500c1.500 1.500 2.500 2.500 2.500 4.500s-1.500 3-3 3-2.500-0.800-4-2.500c-1.500 1.700-2.500 2.500-4 2.500s-3-1-3-3 1-3 2.500-4.500C6 10.500 5 9.500 5 7.500z" fill="none" stroke="#ffffff" stroke-width="2.200"/></svg>
<svg style="left:448px;top:1049px;" width="24" height="22" viewBox="0 0 24 22"><path d="M0 2h9l2 2.500h13v15H0z" fill="#f7c948"/><path d="M0 6h24v13.500H0z" fill="#ffd95a"/><path d="M4 12h16v7.500H4z" fill="#3d9df2"/><path d="M8 15h8v4.500H8z" fill="#ffd95a"/></svg>
<svg style="left:497px;top:1048px;" width="24" height="24" viewBox="0 0 24 24"><circle cx="12" cy="12" r="12" fill="#fff"/><path d="M12 12L1.600 6A12 12 0 0 1 22.400 6z" fill="#ea4335"/><path d="M12 12L22.400 6A12 12 0 0 1 12 24z" fill="#fbbc05"/><path d="M12 12L12 24A12 12 0 0 1 1.600 6z" fill="#34a853"/><circle cx="12" cy="12" r="5.600" fill="#fff"/><circle cx="12" cy="12" r="4.400" fill="#4285f4"/></svg>
<svg style="left:546px;top:1048px;" width="24" height="24" viewBox="0 0 24 24"><circle cx="12" cy="12" r="12" fill="#fff"/><path d="M12 12L1.600 6A12 12 0 0 1 22.400 6z" fill="#ea4335"/><path d="M12 12L22.400 6A12 12 0 0 1 12 24z" fill="#fbbc05"/><path d="M12 12L12 24A12 12 0 0 1 1.600 6z" fill="#34a853"/><circle cx="12" cy="12" r="5.600" fill="#fff"/><circle cx="12" cy="12" r="4.400" fill="#4285f4"/></svg>
<svg style="left:557px;top:1060px;" width="16" height="13" viewBox="0 0 16 13"><ellipse cx="8" cy="7" rx="7" ry="5.500" fill="#2a2020"/><ellipse cx="6.500" cy="8.500" rx="3.500" ry="3" fill="#f1d0b5"/></svg>
<div style="left:583px;top:1040px;width:48px;height:40px;background:#464646;"></div>
<svg style="left:595px;top:1048px;" width="25" height="25" viewBox="0 0 25 25"><path d="M18 1l6 2.600v17.800L18 24 7.500 14.500 3 18l-2.500-1.200V7.200L3 6l4.500 3.500zM18 7.500L11.500 12.500 18 17.500zM3 9.500v6l3-3z" fill="#a179e0" fill-rule="evenodd"/><path d="M18 1l6 2.600v17.800L18 24z" fill="#c6a8f2" opacity="0.550"/></svg>
<svg style="left:645px;top:1048px;" width="22" height="22" viewBox="0 0 22 22"><rect x="0.800" y="0.800" width="20.400" height="20.400" fill="#0b1340" stroke="#8fc1ff" stroke-width="1.600"/></svg>
<div class="t b" style="left:648.5px;top:1051px;color:#8fc1ff;font-size:12.5px;line-height:16px;">Ps</div>
<svg style="left:692px;top:1048px;" width="24" height="24" viewBox="0 0 24 24"><circle cx="12" cy="12" r="12" fill="#fff"/><path d="M12 12L1.600 6A12 12 0 0 1 22.400 6z" fill="#ea4335"/><path d="M12 12L22.400 6A12 12 0 0 1 12 24z" fill="#fbbc05"/><path d="M12 12L12 24A12 12 0 0 1 1.600 6z" fill="#34a853"/><circle cx="12" cy="12" r="5.600" fill="#fff"/><circle cx="12" cy="12" r="4.400" fill="#4285f4"/></svg>
<svg style="left:705px;top:1060px;" width="14" height="14" viewBox="0 0 14 14"><circle cx="7" cy="7" r="7" fill="#8e24aa"/></svg>
<div class="t" style="left:709.5px;top:1062px;color:#ffffff;font-size:8px;line-height:10px;">J</div>
<div style="left:440px;top:1078px;width:40px;height:2px;background:#76b9ed;"></div>
<div style="left:538px;top:1078px;width:40px;height:2px;background:#76b9ed;"></div>
<div style="left:583px;top:1078px;width:48px;height:2px;background:#76b9ed;"></div>
<div style="left:636px;top:1078px;width:40px;height:2px;background:#76b9ed;"></div>
<div style="left:685px;top:1078px;width:40px;height:2px;background:#76b9ed;"></div>
<svg style="left:1504px;top:1050px;" width="26" height="18" viewBox="0 0 26 18"><path d="M6 17.500a5.500 5.500 0 0 1-0.500-11A7 7 0 0 1 19 7.500a5 5 0 0 1 1 10z" fill="#c9dcf7"/><path d="M6 17.500a5.500 5.500 0 0 1-0.500-11A7 7 0 0 1 19 7.500" fill="none" stroke="#e8f1ff" stroke-width="1.200"/></svg>
<div class="t" style="left:1537px;top:1050px;color:#ffffff;font-size:15px;line-height:20px;letter-spacing:-1.129px;">12°C</div>
<div class="t" style="left:1575px;top:1050px;color:#ffffff;font-size:15px;line-height:20px;letter-spacing:-0.340px;">Nublado</div>
<svg style="left:1652px;top:1055px;" width="13" height="8" viewBox="0 0 13 8"><path d="M0.800 7L6.500 1.200 12.200 7" fill="none" stroke="#ffffff" stroke-width="1.400"/></svg>
<svg style="left:1675px;top:1054px;" width="17" height="11" viewBox="0 0 17 11"><path d="M0.600 0.800h13.500v9h-13.500z" fill="none" stroke="#ffffff" stroke-width="1.200"/><path d="M2.500 2.800h5v5h-5z" fill="#ffffff"/><path d="M15 3.500v4" stroke="#ffffff" stroke-width="1.500"/></svg>
<svg style="left:1698px;top:1053px;" width="18" height="12" viewBox="0 0 18 12"><path d="M4 11.500a3.500 3.500 0 0 1-0.300-7A5 5 0 0 1 13 5a3.500 3.500 0 0 1 1 6.500z" fill="#e8e8e8"/></svg>
<svg style="left:1724px;top:1052px;" width="16" height="16" viewBox="0 0 16 16"><path d="M2 14.500A12 12 0 0 1 14 2.500M5 14.500a9 9 0 0 1 9-9M8 14.500a6 6 0 0 1 6-6" fill="none" stroke="#bdbdbd" stroke-width="1.200"/><circle cx="12.500" cy="13.500" r="1.700" fill="#ffffff"/></svg>
<svg style="left:1746px;top:1052px;" width="18" height="16" viewBox="0 0 18 16"><path d="M1 5.500h3l4-4v13l-4-4h-3z" fill="none" stroke="#ffffff" stroke-width="1.100"/><path d="M10.500 5.500a4 4 0 0 1 0 5" fill="none" stroke="#ffffff" stroke-width="1"/><path d="M12.800 3.500a7 7 0 0 1 0 9M15 1.500a10 10 0 0 1 0 13" fill="none" stroke="#8a8a8a" stroke-width="1"/></svg>
<div class="t" style="left:1774.5px;top:1051px;color:#ffffff;font-size:13px;line-height:18px;letter-spacing:-1.345px;">CAT</div>
<div class="t" style="left:1820.5px;top:1043px;color:#ffffff;font-size:12px;line-height:16px;letter-spacing:-0.406px;">22:58</div>
<div class="t" style="left:1806px;top:1061px;color:#ffffff;font-size:12px;line-height:16px;letter-spacing:-0.206px;">31/10/2023</div>
<svg style="left:1879px;top:1051px;" width="17" height="16" viewBox="0 0 17 16"><path d="M0.500 0.500h15.500v11h-8l-3.500 3.500v-3.500h-4z" fill="#ffffff"/><path d="M3 3.500h10.500M3 6h10.500M3 8.500h10.500" stroke="#1d1d1d" stroke-width="1"/></svg>
<svg style="left:1886px;top:1059px;" width="17" height="17" viewBox="0 0 17 17"><circle cx="8.500" cy="8.500" r="7.500" fill="#1d1d1d" stroke="#8a8a8a" stroke-width="1"/></svg>
<div class="t b" style="left:1891.8px;top:1062px;color:#ffffff;font-size:10px;line-height:12px;">5</div>
<div style="left:1915px;top:1040px;width:1px;height:40px;background:#5a5a5a;"></div>
</body></html>
